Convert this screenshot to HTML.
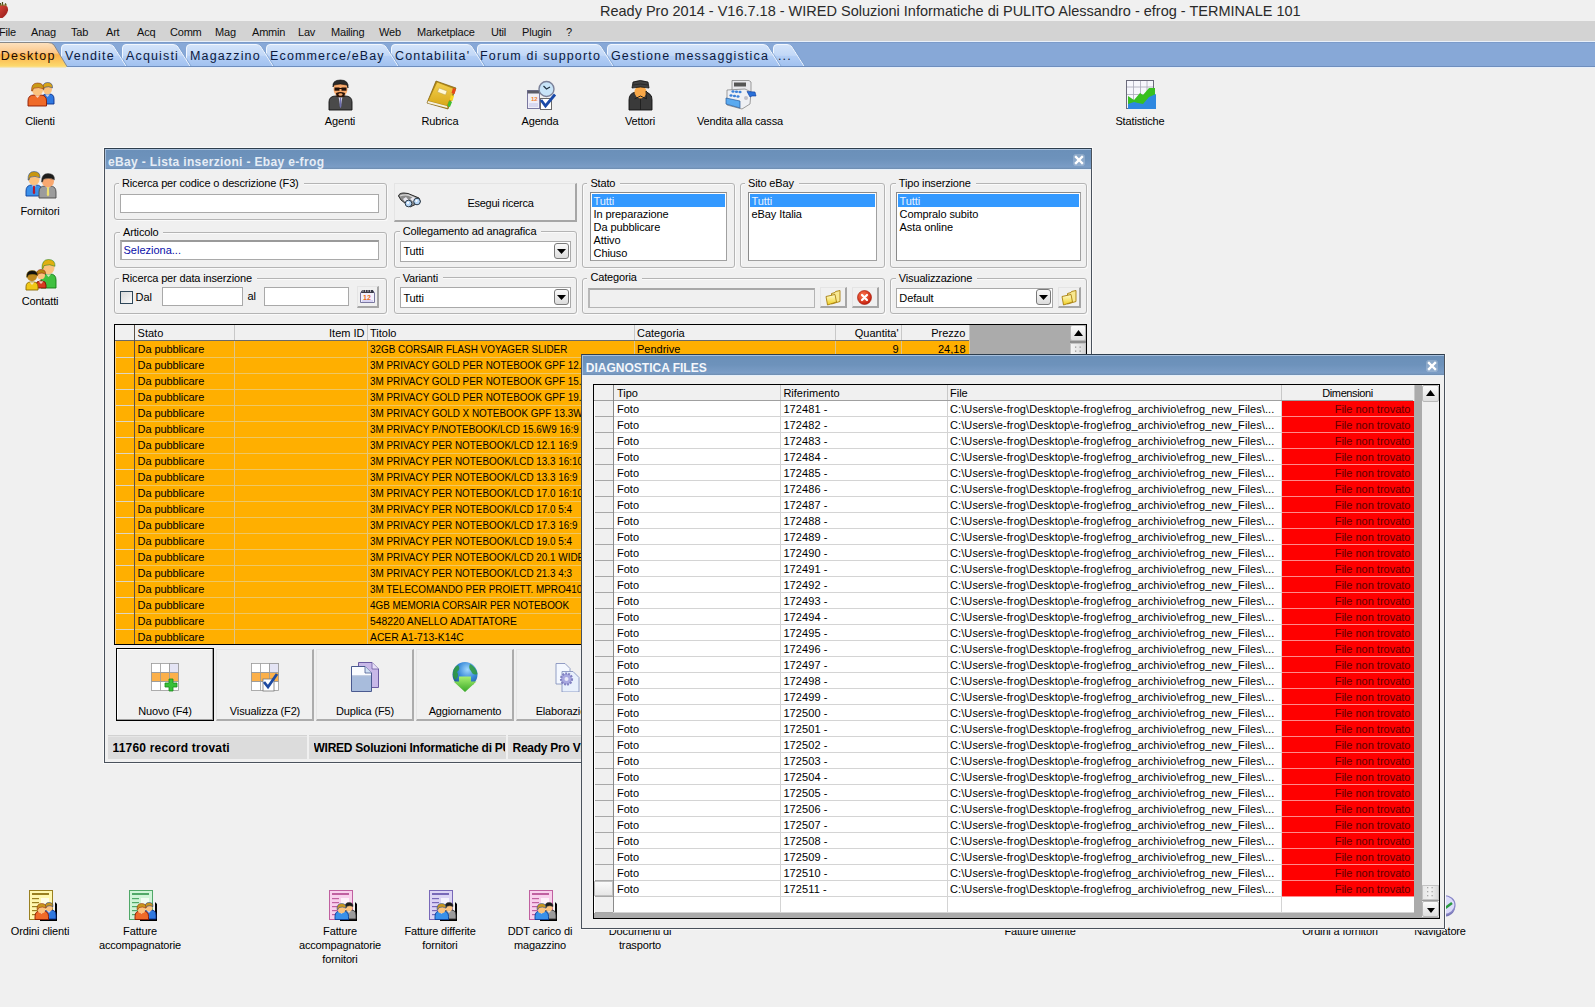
<!DOCTYPE html><html><head><meta charset="utf-8"><title>Ready Pro</title><style>
*{box-sizing:border-box;margin:0;padding:0}
html,body{width:1595px;height:1007px;overflow:hidden;background:#f0f0f0}
body{position:relative;font-family:"Liberation Sans",sans-serif;font-size:11px;color:#000}
.a{position:absolute}
.t{position:absolute;white-space:pre;line-height:1}
.lbl{position:absolute;white-space:pre;line-height:14px;text-align:center;font-size:11px;color:#000;letter-spacing:-0.15px}
</style></head><body><div class="a" style="left:0px;top:0px;width:1595px;height:21px;background:#f0f0f0"></div>
<div class="t" style="left:600px;top:4px;font-size:14.5px;color:#2a2a2a">Ready Pro 2014 - V16.7.18 - WIRED Soluzioni Informatiche di PULITO Alessandro - efrog - TERMINALE 101</div>
<svg class="a" style="left:0;top:0" width="12" height="20" viewBox="0 0 12 20"><defs><linearGradient id="sb" x1="0" y1="0" x2="1" y2="1"><stop offset="0" stop-color="#e04a3a"/><stop offset="1" stop-color="#901818"/></linearGradient></defs><path d="M-3,6 Q2,4.5 6,5.5 Q8.5,7 8,10.5 Q7,14.5 2.5,18 Q-1,18.5 -3,16Z" fill="url(#sb)"/><path d="M0.5,5.5 L0.5,3 M2.5,5.5 L2.5,2 M5.5,5.5 L5.5,3.2" stroke="#4a4a18" stroke-width="1.2"/><path d="M-1,5 L7,5" stroke="#8a7a30" stroke-width="1"/></svg>
<div class="a" style="left:0px;top:21px;width:1595px;height:20px;background:#d3d3d3"></div>
<div class="t" style="left:-1px;top:26.8px;font-size:11px;color:#101010;letter-spacing:-0.2px">File</div>
<div class="t" style="left:31px;top:26.8px;font-size:11px;color:#101010;letter-spacing:-0.2px">Anag</div>
<div class="t" style="left:71px;top:26.8px;font-size:11px;color:#101010;letter-spacing:-0.2px">Tab</div>
<div class="t" style="left:106px;top:26.8px;font-size:11px;color:#101010;letter-spacing:-0.2px">Art</div>
<div class="t" style="left:137px;top:26.8px;font-size:11px;color:#101010;letter-spacing:-0.2px">Acq</div>
<div class="t" style="left:170px;top:26.8px;font-size:11px;color:#101010;letter-spacing:-0.2px">Comm</div>
<div class="t" style="left:215px;top:26.8px;font-size:11px;color:#101010;letter-spacing:-0.2px">Mag</div>
<div class="t" style="left:252px;top:26.8px;font-size:11px;color:#101010;letter-spacing:-0.2px">Ammin</div>
<div class="t" style="left:298px;top:26.8px;font-size:11px;color:#101010;letter-spacing:-0.2px">Lav</div>
<div class="t" style="left:331px;top:26.8px;font-size:11px;color:#101010;letter-spacing:-0.2px">Mailing</div>
<div class="t" style="left:379px;top:26.8px;font-size:11px;color:#101010;letter-spacing:-0.2px">Web</div>
<div class="t" style="left:417px;top:26.8px;font-size:11px;color:#101010;letter-spacing:-0.2px">Marketplace</div>
<div class="t" style="left:491px;top:26.8px;font-size:11px;color:#101010;letter-spacing:-0.2px">Util</div>
<div class="t" style="left:522px;top:26.8px;font-size:11px;color:#101010;letter-spacing:-0.2px">Plugin</div>
<div class="t" style="left:566px;top:26.8px;font-size:11px;color:#101010;letter-spacing:-0.2px">?</div>

<svg class="a" style="left:26px;top:80px" width="32" height="28" viewBox="26 80 32 28"><path d="M42,104 L42,98.8 Q42,94 46.8,94 L49.2,94 Q54,94 54,98.8 L54,104 Z" fill="#2f78e0" stroke="#0b2f8a" stroke-width="0.9"/><path d="M45.0,94.3 L47.5,97 L50.0,94.3Z" fill="#f8e8e0" opacity=".8"/><ellipse cx="47.5" cy="89.05" rx="4.5" ry="5.17" fill="#fbc27e"/><path d="M42.5,89.82 Q42.2,82.5 47.5,82.5 Q52.8,82.5 52.5,87.95 Q48.5,85.75 44.5,87.4 L43.5,89.82Z" fill="#d8a418" stroke="#0b2f8a" stroke-width="0.5"/><path d="M28,106 L28,101 Q28,95 34,95 L40.5,95 Q46.5,95 46.5,101 L46.5,106 Z" fill="#ef6a28" stroke="#8a1800" stroke-width="0.9"/><path d="M35.0,95.3 L37.5,98 L40.0,95.3Z" fill="#f8e8e0" opacity=".8"/><ellipse cx="37.5" cy="90.1" rx="5.5" ry="5.64" fill="#fbc27e"/><path d="M31.5,90.94 Q31.2,83.0 37.5,83.0 Q43.8,83.0 43.5,88.9 Q38.5,86.5 33.5,88.3 L32.5,90.94Z" fill="#c99a16" stroke="#8a1800" stroke-width="0.5"/></svg>
<svg class="a" style="left:24px;top:170px" width="34" height="30" viewBox="24 170 34 30"><path d="M26,196 L26,191 Q26,185 32,185 L36,185 Q42,185 42,191 L42,196 Z" fill="#3a90ea" stroke="#0b3f9a" stroke-width="0.9"/><path d="M31.5,185.3 L34,188 L36.5,185.3Z" fill="#f8e8e0" opacity=".8"/><path d="M33.1,186 L34.9,186 L35.2,193 L34,194.5 L32.8,193Z" fill="#b01830"/><ellipse cx="34" cy="179.15" rx="5.5" ry="6.109999999999999" fill="#fbc27e"/><path d="M28.0,180.06 Q27.7,171.5 34,171.5 Q40.3,171.5 40.0,177.85 Q35,175.25 30.0,177.2 L29.0,180.06Z" fill="#c8960e" stroke="#0b3f9a" stroke-width="0.5"/><path d="M39,198 L39,192 Q39,186 45,186 L50,186 Q56,186 56,192 L56,198 Z" fill="#9c9c9c" stroke="#4a4a4a" stroke-width="0.9"/><path d="M45.5,186.3 L48,189 L50.5,186.3Z" fill="#f8e8e0" opacity=".8"/><path d="M47.1,187 L48.9,187 L49.2,195 L48,196.5 L46.8,195Z" fill="#f0e070"/><ellipse cx="48" cy="181.15" rx="6.0" ry="6.109999999999999" fill="#f9a870"/><path d="M41.5,182.06 Q41.2,173.5 48,173.5 Q54.8,173.5 54.5,179.85 Q49,177.25 43.5,179.2 L42.5,182.06Z" fill="#1c1c1c" stroke="#4a4a4a" stroke-width="0.5"/></svg>
<svg class="a" style="left:24px;top:258px" width="34" height="34" viewBox="24 258 34 34"><path d="M41,288 L41,280 Q41,274 47,274 L50,274 Q56,274 56,280 L56,288 Z" fill="#40c040" stroke="#107a10" stroke-width="0.9"/><path d="M46.0,274.3 L48.5,277 L51.0,274.3Z" fill="#f8e8e0" opacity=".8"/><ellipse cx="48.5" cy="267.7" rx="6.0" ry="6.58" fill="#fbc27e"/><path d="M42.0,268.68 Q41.7,259.5 48.5,259.5 Q55.3,259.5 55.0,266.3 Q49.5,263.5 44.0,265.6 L43.0,268.68Z" fill="#e0b010" stroke="#107a10" stroke-width="0.5"/><path d="M36,288 L36,285.0 Q36,281 40.0,281 L42.0,281 Q46,281 46,285.0 L46,288 Z" fill="#d83a20" stroke="#801000" stroke-width="0.9"/><path d="M38.5,281.3 L41,284 L43.5,281.3Z" fill="#f8e8e0" opacity=".8"/><ellipse cx="41" cy="274.95" rx="4.0" ry="4.2299999999999995" fill="#fbc27e"/><path d="M36.5,275.58 Q36.2,269.5 41,269.5 Q45.8,269.5 45.5,274.05 Q42,272.25 38.5,273.6 L37.5,275.58Z" fill="#b88410" stroke="#801000" stroke-width="0.5"/><path d="M26,290 L26,286.8 Q26,282 30.8,282 L33.2,282 Q38,282 38,286.8 L38,290 Z" fill="#f0c818" stroke="#8a6a00" stroke-width="0.9"/><path d="M29.5,282.3 L32,285 L34.5,282.3Z" fill="#f8e8e0" opacity=".8"/><ellipse cx="32" cy="276.5" rx="5.0" ry="4.699999999999999" fill="#c08a20"/><path d="M26.5,277.2 Q26.2,270.5 32,270.5 Q37.8,270.5 37.5,275.5 Q33,273.5 28.5,275.0 L27.5,277.2Z" fill="#111" stroke="#8a6a00" stroke-width="0.5"/></svg>
<svg class="a" style="left:326px;top:78px" width="30" height="34" viewBox="326 78 30 34"><path d="M329,110 L329,102 Q329,96 336,96 L345,96 Q352,96 352,102 L352,110Z" fill="#4a4a4a" stroke="#111" stroke-width="0.9"/><path d="M338.5,96.5 L340.5,108 L342.5,96.5Z" fill="#d8d8f0"/><path d="M340,98 L341,98 L341.5,106 L340.5,108 L339.5,106Z" fill="#7070b0"/><ellipse cx="340.5" cy="89" rx="7" ry="8" fill="#f7a86a"/><path d="M333,87 Q332,80 340.5,80 Q349,80 348,88 L347,85 Q340,83 334,85Z" fill="#2a2a2a" stroke="#000" stroke-width="0.6"/><rect x="334.5" y="87.5" width="5" height="3.2" fill="#221008"/><rect x="341.5" y="87.5" width="5" height="3.2" fill="#221008"/><rect x="339" y="88" width="3" height="1" fill="#221008"/><path d="M336,93 Q340.5,91 345,93 L344.5,96.5 Q340.5,98.5 336.5,96.5Z" fill="#2a1408"/><ellipse cx="340.5" cy="94.5" rx="2" ry="1.2" fill="#f7a86a"/></svg>
<svg class="a" style="left:626px;top:78px" width="30" height="34" viewBox="626 78 30 34"><path d="M629,110 L629,100 Q629,93 636,92 L645,92 Q652,93 652,100 L652,110Z" fill="#3a3a3a" stroke="#111" stroke-width="0.9"/><path d="M640.5,97 L640.5,110" stroke="#1a1a1a" stroke-width="0.8"/><ellipse cx="640.5" cy="92" rx="6" ry="6.5" fill="#f9a848"/><path d="M634.5,99 L640.5,96 L646.5,99 L646,91 L652,97" fill="none" stroke="#222" stroke-width="1"/><path d="M632,88 L633,82 Q640,79 648,82 L649,88 Q640.5,86 632,88Z" fill="#404040" stroke="#111" stroke-width="0.8"/><path d="M633,85 Q640.5,83 648,85" stroke="#222" stroke-width="0.8" fill="none"/></svg>
<svg class="a" style="left:424px;top:79px" width="34" height="33" viewBox="424 79 34 33"><defs><linearGradient id="rb" x1="0" y1="0" x2="0" y2="1"><stop offset="0" stop-color="#f4d050"/><stop offset="1" stop-color="#d8a818"/></linearGradient></defs><path d="M427,103 L436,81 L456,88 L448,109Z" fill="#b88a10" stroke="#7a5a08" stroke-width="0.7"/><path d="M428,101 L437,82 L455,89 L447,106Z" fill="url(#rb)" stroke="#a07a10" stroke-width="0.6"/><path d="M428,101 L447,106 L447.5,108 L427.5,103Z" fill="#f4f0e0"/><path d="M439,88 L447,91 L445.5,95 L437.5,92Z" fill="#fff8d8" stroke="#b8a050" stroke-width="0.5"/><path d="M453,88 L456,89 L454.5,94 L451.5,93Z" fill="#e84818"/><path d="M451,95 L454,96 L452.5,101 L449.5,100Z" fill="#f8d820"/><path d="M449,101 L452,102 L450,107 L447.5,106Z" fill="#40c030"/></svg>
<svg class="a" style="left:524px;top:79px" width="34" height="33" viewBox="524 79 34 33"><rect x="527.5" y="90.5" width="12" height="18" fill="#f0eef8" stroke="#7a78a0" stroke-width="1"/><rect x="527.5" y="90.5" width="12" height="3" fill="#5a5a6a"/><text x="531" y="101" font-size="6" font-weight="bold" font-family="Liberation Sans" fill="#f08030">12</text><rect x="529" y="103" width="9" height="4" fill="#d8d8f0"/><circle cx="546.5" cy="89" r="7.5" fill="#c8e4f8" stroke="#7a8098" stroke-width="1.4"/><path d="M543.5,86 L546.5,89 L550,87" stroke="#203040" stroke-width="1.2" fill="none"/><rect x="540.5" y="98.5" width="11" height="11" fill="#fff" stroke="#6a6a6a" stroke-width="1"/><path d="M541,100 L545.5,106 L555,94.5" stroke="#1a4aa8" stroke-width="2.8" fill="none"/></svg>
<svg class="a" style="left:724px;top:78px" width="34" height="33" viewBox="724 78 34 33"><path d="M732,80.5 L749,80.5 L751,82 L751,92 L732,92Z" fill="#e8e8ec" stroke="#777" stroke-width="0.7"/><rect x="734" y="82.5" width="12" height="4" fill="#555"/><path d="M727,90 L745,89 L751,92 L750,104 L742,109 L727,105Z" fill="#eef0f4" stroke="#777" stroke-width="0.7"/><ellipse cx="733" cy="91.5" rx="1.6" ry="1.2" fill="#3a80d8"/><ellipse cx="736.5" cy="91.8" rx="1.6" ry="1.2" fill="#3a80d8"/><ellipse cx="740" cy="92" rx="1.6" ry="1.2" fill="#3a80d8"/><ellipse cx="731" cy="95.5" rx="1.6" ry="1.3" fill="#3a80d8"/><ellipse cx="734.5" cy="96" rx="1.6" ry="1.3" fill="#3a80d8"/><ellipse cx="738" cy="96.5" rx="1.6" ry="1.3" fill="#3a80d8"/><path d="M726,98 L740,101 L740,108 L726,104Z" fill="#5aaaf0" stroke="#2a5a9a" stroke-width="0.7"/><path d="M747,91.5 L755,92 L756,96 L752,96 L750,97Z" fill="#2a70d8" stroke="#0a3a9a" stroke-width="0.6"/><circle cx="746" cy="98" r="2" fill="#c0c0c8"/></svg>
<svg class="a" style="left:1124px;top:78px" width="34" height="34" viewBox="1124 78 34 34"><rect x="1126.5" y="80.5" width="27" height="28" fill="#f6f6fc" stroke="#6a6a7a" stroke-width="1"/><path d="M1127,87 H1153 M1127,94.5 H1153 M1133.5,81 V109 M1140.5,81 V109 M1147,81 V109" stroke="#a8a8b8" stroke-width="0.8"/><path d="M1128,96 L1134,100 L1140,93 L1143,95 L1149,88 L1155,88 L1155,102 L1149,104 L1140,107 L1128,108Z" fill="#38c020"/><path d="M1128,104 L1134,102 L1138,103 L1143,104 L1149,97 L1156,94 L1156,109 L1128,109Z" fill="#2e88e0"/></svg>
<svg class="a" style="left:25px;top:886px" width="36" height="38" viewBox="25 886 36 38"><rect x="29.5" y="890.5" width="23" height="29" fill="#fff8b0" stroke="#9a8020" stroke-width="1"/><rect x="32" y="893" width="17" height="2" fill="#9a8020"/><rect x="32" y="898" width="7" height="1.2" fill="#9a8020"/><rect x="32" y="902" width="7" height="1.2" fill="#9a8020"/><rect x="32" y="906" width="7" height="1.2" fill="#9a8020"/><rect x="32" y="910" width="7" height="1.2" fill="#9a8020"/><rect x="32" y="914" width="7" height="1.2" fill="#9a8020"/><rect x="41" y="898" width="8" height="6" fill="#fff" opacity=".7"/><path d="M40,921 L57,921 L57,904 L55,902 L55,919 L40,919Z" fill="#000"/><path d="M43,919 L43,915.2 Q43,910 48.2,910 L50.8,910 Q56,910 56,915.2 L56,919 Z" fill="#2f78e0" stroke="#0b2f8a" stroke-width="0.9"/><path d="M46.5,910.3 L49,913 L51.5,910.3Z" fill="#f8e8e0" opacity=".8"/><ellipse cx="49" cy="907.4" rx="3.5" ry="3.76" fill="#fbc27e"/><path d="M45.0,907.96 Q44.7,902.5 49,902.5 Q53.3,902.5 53.0,906.6 Q50,905.0 47.0,906.2 L46.0,907.96Z" fill="#c8961e" stroke="#0b2f8a" stroke-width="0.5"/><path d="M35,919.5 L35,916.4 Q35,911 40.4,911 L43.1,911 Q48.5,911 48.5,916.4 L48.5,919.5 Z" fill="#ef6a28" stroke="#8a1800" stroke-width="0.9"/><path d="M39.0,911.3 L41.5,914 L44.0,911.3Z" fill="#f8e8e0" opacity=".8"/><ellipse cx="41.5" cy="908.95" rx="4.0" ry="4.2299999999999995" fill="#fbc27e"/><path d="M37.0,909.58 Q36.7,903.5 41.5,903.5 Q46.3,903.5 46.0,908.05 Q42.5,906.25 39.0,907.6 L38.0,909.58Z" fill="#c8961e" stroke="#8a1800" stroke-width="0.5"/></svg>
<svg class="a" style="left:125px;top:886px" width="36" height="38" viewBox="125 886 36 38"><rect x="129.5" y="890.5" width="23" height="29" fill="#d0f4d8" stroke="#50a868" stroke-width="1"/><rect x="132" y="893" width="17" height="2" fill="#50a868"/><rect x="132" y="898" width="7" height="1.2" fill="#50a868"/><rect x="132" y="902" width="7" height="1.2" fill="#50a868"/><rect x="132" y="906" width="7" height="1.2" fill="#50a868"/><rect x="132" y="910" width="7" height="1.2" fill="#50a868"/><rect x="132" y="914" width="7" height="1.2" fill="#50a868"/><rect x="141" y="898" width="8" height="6" fill="#fff" opacity=".7"/><path d="M140,921 L157,921 L157,904 L155,902 L155,919 L140,919Z" fill="#000"/><path d="M143,919 L143,915.2 Q143,910 148.2,910 L150.8,910 Q156,910 156,915.2 L156,919 Z" fill="#2f78e0" stroke="#0b2f8a" stroke-width="0.9"/><path d="M146.5,910.3 L149,913 L151.5,910.3Z" fill="#f8e8e0" opacity=".8"/><ellipse cx="149" cy="907.4" rx="3.5" ry="3.76" fill="#fbc27e"/><path d="M145.0,907.96 Q144.7,902.5 149,902.5 Q153.3,902.5 153.0,906.6 Q150,905.0 147.0,906.2 L146.0,907.96Z" fill="#c8961e" stroke="#0b2f8a" stroke-width="0.5"/><path d="M135,919.5 L135,916.4 Q135,911 140.4,911 L143.1,911 Q148.5,911 148.5,916.4 L148.5,919.5 Z" fill="#ef6a28" stroke="#8a1800" stroke-width="0.9"/><path d="M139.0,911.3 L141.5,914 L144.0,911.3Z" fill="#f8e8e0" opacity=".8"/><ellipse cx="141.5" cy="908.95" rx="4.0" ry="4.2299999999999995" fill="#fbc27e"/><path d="M137.0,909.58 Q136.7,903.5 141.5,903.5 Q146.3,903.5 146.0,908.05 Q142.5,906.25 139.0,907.6 L138.0,909.58Z" fill="#c8961e" stroke="#8a1800" stroke-width="0.5"/></svg>
<svg class="a" style="left:325px;top:886px" width="36" height="38" viewBox="325 886 36 38"><rect x="329.5" y="890.5" width="23" height="29" fill="#f8d0ec" stroke="#c060a0" stroke-width="1"/><rect x="332" y="893" width="17" height="2" fill="#c060a0"/><rect x="332" y="898" width="7" height="1.2" fill="#c060a0"/><rect x="332" y="902" width="7" height="1.2" fill="#c060a0"/><rect x="332" y="906" width="7" height="1.2" fill="#c060a0"/><rect x="332" y="910" width="7" height="1.2" fill="#c060a0"/><rect x="332" y="914" width="7" height="1.2" fill="#c060a0"/><rect x="341" y="898" width="8" height="6" fill="#fff" opacity=".7"/><path d="M340,921 L357,921 L357,904 L355,902 L355,919 L340,919Z" fill="#000"/><path d="M343,919 L343,915.2 Q343,910 348.2,910 L350.8,910 Q356,910 356,915.2 L356,919 Z" fill="#9c9c9c" stroke="#333" stroke-width="0.9"/><path d="M346.5,910.3 L349,913 L351.5,910.3Z" fill="#f8e8e0" opacity=".8"/><ellipse cx="349" cy="907.4" rx="3.5" ry="3.76" fill="#fbc27e"/><path d="M345.0,907.96 Q344.7,902.5 349,902.5 Q353.3,902.5 353.0,906.6 Q350,905.0 347.0,906.2 L346.0,907.96Z" fill="#1c1c1c" stroke="#333" stroke-width="0.5"/><path d="M335,919.5 L335,916.4 Q335,911 340.4,911 L343.1,911 Q348.5,911 348.5,916.4 L348.5,919.5 Z" fill="#3a90ea" stroke="#0b3f9a" stroke-width="0.9"/><path d="M339.0,911.3 L341.5,914 L344.0,911.3Z" fill="#f8e8e0" opacity=".8"/><ellipse cx="341.5" cy="908.95" rx="4.0" ry="4.2299999999999995" fill="#fbc27e"/><path d="M337.0,909.58 Q336.7,903.5 341.5,903.5 Q346.3,903.5 346.0,908.05 Q342.5,906.25 339.0,907.6 L338.0,909.58Z" fill="#c8961e" stroke="#0b3f9a" stroke-width="0.5"/></svg>
<svg class="a" style="left:425px;top:886px" width="36" height="38" viewBox="425 886 36 38"><rect x="429.5" y="890.5" width="23" height="29" fill="#dcd4f4" stroke="#7868b8" stroke-width="1"/><rect x="432" y="893" width="17" height="2" fill="#7868b8"/><rect x="432" y="898" width="7" height="1.2" fill="#7868b8"/><rect x="432" y="902" width="7" height="1.2" fill="#7868b8"/><rect x="432" y="906" width="7" height="1.2" fill="#7868b8"/><rect x="432" y="910" width="7" height="1.2" fill="#7868b8"/><rect x="432" y="914" width="7" height="1.2" fill="#7868b8"/><rect x="441" y="898" width="8" height="6" fill="#fff" opacity=".7"/><path d="M440,921 L457,921 L457,904 L455,902 L455,919 L440,919Z" fill="#000"/><path d="M443,919 L443,915.2 Q443,910 448.2,910 L450.8,910 Q456,910 456,915.2 L456,919 Z" fill="#9c9c9c" stroke="#333" stroke-width="0.9"/><path d="M446.5,910.3 L449,913 L451.5,910.3Z" fill="#f8e8e0" opacity=".8"/><ellipse cx="449" cy="907.4" rx="3.5" ry="3.76" fill="#fbc27e"/><path d="M445.0,907.96 Q444.7,902.5 449,902.5 Q453.3,902.5 453.0,906.6 Q450,905.0 447.0,906.2 L446.0,907.96Z" fill="#1c1c1c" stroke="#333" stroke-width="0.5"/><path d="M435,919.5 L435,916.4 Q435,911 440.4,911 L443.1,911 Q448.5,911 448.5,916.4 L448.5,919.5 Z" fill="#3a90ea" stroke="#0b3f9a" stroke-width="0.9"/><path d="M439.0,911.3 L441.5,914 L444.0,911.3Z" fill="#f8e8e0" opacity=".8"/><ellipse cx="441.5" cy="908.95" rx="4.0" ry="4.2299999999999995" fill="#fbc27e"/><path d="M437.0,909.58 Q436.7,903.5 441.5,903.5 Q446.3,903.5 446.0,908.05 Q442.5,906.25 439.0,907.6 L438.0,909.58Z" fill="#c8961e" stroke="#0b3f9a" stroke-width="0.5"/></svg>
<svg class="a" style="left:525px;top:886px" width="36" height="38" viewBox="525 886 36 38"><rect x="529.5" y="890.5" width="23" height="29" fill="#f8d0ec" stroke="#c060a0" stroke-width="1"/><rect x="532" y="893" width="17" height="2" fill="#c060a0"/><rect x="532" y="898" width="7" height="1.2" fill="#c060a0"/><rect x="532" y="902" width="7" height="1.2" fill="#c060a0"/><rect x="532" y="906" width="7" height="1.2" fill="#c060a0"/><rect x="532" y="910" width="7" height="1.2" fill="#c060a0"/><rect x="532" y="914" width="7" height="1.2" fill="#c060a0"/><rect x="541" y="898" width="8" height="6" fill="#fff" opacity=".7"/><path d="M540,921 L557,921 L557,904 L555,902 L555,919 L540,919Z" fill="#000"/><path d="M543,919 L543,915.2 Q543,910 548.2,910 L550.8,910 Q556,910 556,915.2 L556,919 Z" fill="#9c9c9c" stroke="#333" stroke-width="0.9"/><path d="M546.5,910.3 L549,913 L551.5,910.3Z" fill="#f8e8e0" opacity=".8"/><ellipse cx="549" cy="907.4" rx="3.5" ry="3.76" fill="#fbc27e"/><path d="M545.0,907.96 Q544.7,902.5 549,902.5 Q553.3,902.5 553.0,906.6 Q550,905.0 547.0,906.2 L546.0,907.96Z" fill="#1c1c1c" stroke="#333" stroke-width="0.5"/><path d="M535,919.5 L535,916.4 Q535,911 540.4,911 L543.1,911 Q548.5,911 548.5,916.4 L548.5,919.5 Z" fill="#3a90ea" stroke="#0b3f9a" stroke-width="0.9"/><path d="M539.0,911.3 L541.5,914 L544.0,911.3Z" fill="#f8e8e0" opacity=".8"/><ellipse cx="541.5" cy="908.95" rx="4.0" ry="4.2299999999999995" fill="#fbc27e"/><path d="M537.0,909.58 Q536.7,903.5 541.5,903.5 Q546.3,903.5 546.0,908.05 Q542.5,906.25 539.0,907.6 L538.0,909.58Z" fill="#c8961e" stroke="#0b3f9a" stroke-width="0.5"/></svg>
<svg class="a" style="left:1420px;top:886px" width="40" height="34" viewBox="1420 886 40 34"><ellipse cx="1444" cy="907" rx="11" ry="10" fill="#7a78b8"/><ellipse cx="1444" cy="905" rx="11" ry="9.5" fill="#dcdcfa" stroke="#8a88c8" stroke-width="1.2"/><path d="M1444,909 L1452,903" stroke="#2a9a40" stroke-width="2.5"/></svg>
<div class="lbl" style="left:-30px;top:114px;width:140px">Clienti</div>
<div class="lbl" style="left:270px;top:114px;width:140px">Agenti</div>
<div class="lbl" style="left:370px;top:114px;width:140px">Rubrica</div>
<div class="lbl" style="left:470px;top:114px;width:140px">Agenda</div>
<div class="lbl" style="left:570px;top:114px;width:140px">Vettori</div>
<div class="lbl" style="left:670px;top:114px;width:140px">Vendita alla cassa</div>
<div class="lbl" style="left:1070px;top:114px;width:140px">Statistiche</div>
<div class="lbl" style="left:-30px;top:204px;width:140px">Fornitori</div>
<div class="lbl" style="left:-30px;top:294px;width:140px">Contatti</div>
<div class="lbl" style="left:-30px;top:924px;width:140px">Ordini clienti</div>
<div class="lbl" style="left:70px;top:924px;width:140px">Fatture<br>accompagnatorie</div>
<div class="lbl" style="left:270px;top:924px;width:140px">Fatture<br>accompagnatorie<br>fornitori</div>
<div class="lbl" style="left:370px;top:924px;width:140px">Fatture differite<br>fornitori</div>
<div class="lbl" style="left:470px;top:924px;width:140px">DDT carico di<br>magazzino</div>
<div class="lbl" style="left:570px;top:924px;width:140px">Documenti di<br>trasporto</div>
<div class="lbl" style="left:970px;top:924px;width:140px">Fatture differite</div>
<div class="lbl" style="left:1270px;top:924px;width:140px">Ordini a fornitori</div>
<div class="lbl" style="left:1370px;top:924px;width:140px">Navigatore</div>
<svg class="a" style="left:0;top:41px" width="1595" height="27" viewBox="0 41 1595 27"><defs><linearGradient id="tg" x1="0" y1="0" x2="0" y2="1"><stop offset="0" stop-color="#d4e4fa"/><stop offset="0.5" stop-color="#c2d8f7"/><stop offset="0.56" stop-color="#b2cdf4"/><stop offset="1" stop-color="#a2c2f0"/></linearGradient><linearGradient id="ag" x1="0" y1="0" x2="0" y2="1"><stop offset="0" stop-color="#fde2c0"/><stop offset="0.42" stop-color="#fcc88a"/><stop offset="0.5" stop-color="#fbb04a"/><stop offset="1" stop-color="#fcdc70"/></linearGradient></defs><rect x="0" y="41" width="1595" height="26" fill="#87a8d7"/><rect x="0" y="42" width="1595" height="1" fill="#7b9bca"/><rect x="0" y="41" width="1595" height="1" fill="#e8f0fa"/><rect x="0" y="66" width="1595" height="1" fill="#6e8ebe"/><rect x="0" y="67" width="1595" height="1" fill="#e9f0f9"/><path d="M773.5,66 L773.5,48 Q773.5,44.5 777,44.5 L787,44.5 Q790,44.5 792,47 L804,66 Z" fill="url(#tg)"/><path d="M773.5,66 L773.5,48 Q773.5,44.5 777,44.5 L787,44.5 Q790,44.5 792,47 L804,66" fill="none" stroke="#f2f7fe" stroke-width="1"/><path d="M792,47 L804,66" stroke="#7fa2d2" stroke-width="0.8" fill="none" transform="translate(1,0)"/><path d="M607.5,66 L607.5,48 Q607.5,44.5 611,44.5 L763,44.5 Q766,44.5 768,47 L780,66 Z" fill="url(#tg)"/><path d="M607.5,66 L607.5,48 Q607.5,44.5 611,44.5 L763,44.5 Q766,44.5 768,47 L780,66" fill="none" stroke="#f2f7fe" stroke-width="1"/><path d="M768,47 L780,66" stroke="#7fa2d2" stroke-width="0.8" fill="none" transform="translate(1,0)"/><path d="M477.5,66 L477.5,48 Q477.5,44.5 481,44.5 L596,44.5 Q599,44.5 601,47 L613,66 Z" fill="url(#tg)"/><path d="M477.5,66 L477.5,48 Q477.5,44.5 481,44.5 L596,44.5 Q599,44.5 601,47 L613,66" fill="none" stroke="#f2f7fe" stroke-width="1"/><path d="M601,47 L613,66" stroke="#7fa2d2" stroke-width="0.8" fill="none" transform="translate(1,0)"/><path d="M391.5,66 L391.5,48 Q391.5,44.5 395,44.5 L467,44.5 Q470,44.5 472,47 L484,66 Z" fill="url(#tg)"/><path d="M391.5,66 L391.5,48 Q391.5,44.5 395,44.5 L467,44.5 Q470,44.5 472,47 L484,66" fill="none" stroke="#f2f7fe" stroke-width="1"/><path d="M472,47 L484,66" stroke="#7fa2d2" stroke-width="0.8" fill="none" transform="translate(1,0)"/><path d="M266.5,66 L266.5,48 Q266.5,44.5 270,44.5 L381,44.5 Q384,44.5 386,47 L398,66 Z" fill="url(#tg)"/><path d="M266.5,66 L266.5,48 Q266.5,44.5 270,44.5 L381,44.5 Q384,44.5 386,47 L398,66" fill="none" stroke="#f2f7fe" stroke-width="1"/><path d="M386,47 L398,66" stroke="#7fa2d2" stroke-width="0.8" fill="none" transform="translate(1,0)"/><path d="M186.5,66 L186.5,48 Q186.5,44.5 190,44.5 L256,44.5 Q259,44.5 261,47 L273,66 Z" fill="url(#tg)"/><path d="M186.5,66 L186.5,48 Q186.5,44.5 190,44.5 L256,44.5 Q259,44.5 261,47 L273,66" fill="none" stroke="#f2f7fe" stroke-width="1"/><path d="M261,47 L273,66" stroke="#7fa2d2" stroke-width="0.8" fill="none" transform="translate(1,0)"/><path d="M122.5,66 L122.5,48 Q122.5,44.5 126,44.5 L173,44.5 Q176,44.5 178,47 L190,66 Z" fill="url(#tg)"/><path d="M122.5,66 L122.5,48 Q122.5,44.5 126,44.5 L173,44.5 Q176,44.5 178,47 L190,66" fill="none" stroke="#f2f7fe" stroke-width="1"/><path d="M178,47 L190,66" stroke="#7fa2d2" stroke-width="0.8" fill="none" transform="translate(1,0)"/><path d="M61.5,66 L61.5,48 Q61.5,44.5 65,44.5 L109,44.5 Q112,44.5 114,47 L126,66 Z" fill="url(#tg)"/><path d="M61.5,66 L61.5,48 Q61.5,44.5 65,44.5 L109,44.5 Q112,44.5 114,47 L126,66" fill="none" stroke="#f2f7fe" stroke-width="1"/><path d="M114,47 L126,66" stroke="#7fa2d2" stroke-width="0.8" fill="none" transform="translate(1,0)"/><path d="M-3,67 L-3,42.5 L48,42.5 Q52,42.5 54,45 L67,67 Z" fill="url(#ag)"/><path d="M-3,42.5 L48,42.5 Q52,42.5 54,45 L67,66.5" fill="none" stroke="#888" stroke-width="1"/><rect x="0" y="66" width="66" height="1.5" fill="#fcdc80"/></svg>
<div class="t" style="left:65px;top:50.22px;font-size:12.5px;letter-spacing:1.15px;color:#0c1a3e">Vendite</div>
<div class="t" style="left:126px;top:50.22px;font-size:12.5px;letter-spacing:1.15px;color:#0c1a3e">Acquisti</div>
<div class="t" style="left:190px;top:50.22px;font-size:12.5px;letter-spacing:1.15px;color:#0c1a3e">Magazzino</div>
<div class="t" style="left:270px;top:50.22px;font-size:12.5px;letter-spacing:1.15px;color:#0c1a3e">Ecommerce/eBay</div>
<div class="t" style="left:395px;top:50.22px;font-size:12.5px;letter-spacing:1.15px;color:#0c1a3e">Contabilita'</div>
<div class="t" style="left:480px;top:50.22px;font-size:12.5px;letter-spacing:1.15px;color:#0c1a3e">Forum di supporto</div>
<div class="t" style="left:611px;top:50.22px;font-size:12.5px;letter-spacing:1.15px;color:#0c1a3e">Gestione messaggistica</div>
<div class="t" style="left:778px;top:50.22px;font-size:12.5px;letter-spacing:1.15px;color:#0c1a3e">...</div>
<div class="t" style="left:0.8px;top:50.22px;font-size:12.5px;letter-spacing:1.3px;color:#200800">Desktop</div>
<div class="a" style="left:104px;top:148px;width:988px;height:615px;background:#f0f0f0;border:1px solid #4a525c;border-top-color:#2e3e4e;outline:1px solid #fafafa"></div>
<div class="a" style="left:105px;top:149px;width:986px;height:21px;background:linear-gradient(#6b90b9,#6d92bb 45%,#7b9dc6 90%,#6e8cae);border-top:1px solid #a6bfdc;border-bottom:1px solid #e6f0fa;box-shadow:inset 1px 0 0 #a8c0dc"></div>
<div class="t" style="left:108px;top:155.63px;font-size:12px;font-weight:bold;color:#e6edf5;letter-spacing:0.35px">eBay - Lista inserzioni - Ebay e-frog</div>
<svg class="a" style="left:1073px;top:154px" width="12" height="12" viewBox="0 0 12 12"><rect x="0.5" y="0.5" width="11" height="11" rx="1.5" fill="rgba(255,255,255,.2)" stroke="rgba(255,255,255,.12)" stroke-width="1"/><path d="M3,3 L9,9 M9,3 L3,9" stroke="#fff" stroke-width="2.4" stroke-linecap="square"/></svg>
<div class="a" style="left:114px;top:183px;width:273px;height:37px;border:1px solid #b4b4b4;border-radius:3px;box-shadow:inset 1px 1px 0 #fafafa, 1px 1px 0 #fafafa"></div>
<div class="t" style="left:119px;top:177.86px;font-size:11px;color:#000;letter-spacing:-0.15px;background:#f0f0f0;padding:0 5px 0 3px">Ricerca per codice o descrizione (F3)</div>
<div class="a" style="left:120px;top:194px;width:259px;height:19px;background:#fff;border:1px solid #a9a9a9;"></div>
<div class="a" style="left:114px;top:232px;width:273px;height:36px;border:1px solid #b4b4b4;border-radius:3px;box-shadow:inset 1px 1px 0 #fafafa, 1px 1px 0 #fafafa"></div>
<div class="t" style="left:120px;top:226.86px;font-size:11px;color:#000;letter-spacing:-0.15px;background:#f0f0f0;padding:0 5px 0 3px">Articolo</div>
<div class="a" style="left:120px;top:240px;width:259px;height:20px;background:#fff;border:1px solid #a9a9a9;border-top:2px solid #9a9a9a;border-left:2px solid #b0b0b0"></div>
<div class="t" style="left:123.5px;top:244.56px;font-size:11px;color:#0a10a8">Seleziona...</div>
<div class="a" style="left:114px;top:278px;width:273px;height:36px;border:1px solid #b4b4b4;border-radius:3px;box-shadow:inset 1px 1px 0 #fafafa, 1px 1px 0 #fafafa"></div>
<div class="t" style="left:119px;top:273.36px;font-size:11px;color:#000;letter-spacing:-0.15px;background:#f0f0f0;padding:0 5px 0 3px">Ricerca per data inserzione</div>
<div class="a" style="left:120px;top:291px;width:13px;height:13px;border:1.5px solid #2e4658;background:linear-gradient(135deg,#dadada,#fafafa)"></div>
<div class="t" style="left:135.5px;top:292.46px;font-size:11px;">Dal</div>
<div class="a" style="left:162px;top:287px;width:81px;height:19px;background:#fff;border:1px solid #a9a9a9;"></div>
<div class="t" style="left:247.5px;top:290.86px;font-size:11px;">al</div>
<div class="a" style="left:264px;top:287px;width:85px;height:19px;background:#fff;border:1px solid #a9a9a9;"></div>
<div class="a" style="left:357px;top:286px;width:22px;height:22px;background:#f0f0f0;border-top:1px solid #e4e4e4;border-left:1px solid #e4e4e4;border-right:2px solid #a6a6a6;border-bottom:2px solid #a6a6a6;"></div>
<svg class="a" style="left:359px;top:288px" width="17" height="17" viewBox="0 0 17 17"><path d="M1.5,5 L3,3 H14 L15.5,5 V14.5 H1.5Z" fill="#f4f2fc" stroke="#7a78a0" stroke-width="1"/><path d="M3,2 H14 L15,5 H2Z" fill="#3a3a48"/><path d="M4,1.5 V4 M6.5,1.5 V4 M9,1.5 V4 M11.5,1.5 V4" stroke="#fff" stroke-width="0.6"/><text x="4" y="11.5" font-size="7" font-weight="bold" font-family="Liberation Sans" fill="#e86a20">12</text><rect x="3" y="12" width="11" height="2" fill="#d8d4f4"/></svg>
<div class="a" style="left:394px;top:183px;width:183px;height:39px;background:#f0f0f0;border-top:1px solid #e4e4e4;border-left:1px solid #e4e4e4;border-right:2px solid #a6a6a6;border-bottom:2px solid #a6a6a6;"></div>
<svg class="a" style="left:396px;top:190px" width="26" height="20" viewBox="396 190 26 20"><path d="M398.5,196 Q399,193 404,193 L408,193.5 L419,198 L420.5,202 L410,207 L401,200Z" fill="#8a8a8a" stroke="#2a2a2a" stroke-width="1"/><path d="M400,196 Q403,194.5 408,195 L416,198.5" stroke="#d8d8d8" stroke-width="1.3" fill="none"/><path d="M403,199 L408,206 L411,203 L406,197Z M410,199 L416,204 L419,200 L413,197Z" fill="#e8e8f0"/><circle cx="408.5" cy="203.5" r="3.3" fill="#b8d8f8" stroke="#2a3a4a" stroke-width="1"/><circle cx="417" cy="201.5" r="3.3" fill="#b8d8f8" stroke="#2a3a4a" stroke-width="1"/><circle cx="408" cy="202.8" r="1.1" fill="#fff"/><circle cx="416.5" cy="200.8" r="1.1" fill="#fff"/></svg>
<div class="t" style="left:467.4px;top:198.06px;font-size:11px;letter-spacing:-0.25px">Esegui ricerca</div>
<div class="a" style="left:394px;top:231px;width:183px;height:37px;border:1px solid #b4b4b4;border-radius:3px;box-shadow:inset 1px 1px 0 #fafafa, 1px 1px 0 #fafafa"></div>
<div class="t" style="left:399.7px;top:226.36px;font-size:11px;color:#000;letter-spacing:-0.15px;background:#f0f0f0;padding:0 5px 0 3px">Collegamento ad anagrafica</div>
<div class="a" style="left:400px;top:241px;width:171px;height:21px;background:#fff;border:1px solid #a9a9a9;"></div>
<div class="t" style="left:403.4px;top:246.46px;font-size:11px;letter-spacing:-0.1px">Tutti</div>
<div class="a" style="left:554px;top:243px;width:15px;height:16px;border:1px solid #7a7a7a;border-radius:3px;background:linear-gradient(#fafafa,#dcdcdc)"></div>
<svg class="a" style="left:557px;top:249px" width="9" height="5" viewBox="0 0 9 5"><path d="M0,0 H9 L4.5,5Z" fill="#000"/></svg>
<div class="a" style="left:394px;top:277px;width:183px;height:37px;border:1px solid #b4b4b4;border-radius:3px;box-shadow:inset 1px 1px 0 #fafafa, 1px 1px 0 #fafafa"></div>
<div class="t" style="left:399.7px;top:272.56px;font-size:11px;color:#000;letter-spacing:-0.15px;background:#f0f0f0;padding:0 5px 0 3px">Varianti</div>
<div class="a" style="left:400px;top:287px;width:171px;height:21px;background:#fff;border:1px solid #a9a9a9;"></div>
<div class="t" style="left:403.4px;top:292.66px;font-size:11px;letter-spacing:-0.1px">Tutti</div>
<div class="a" style="left:554px;top:289px;width:15px;height:16px;border:1px solid #7a7a7a;border-radius:3px;background:linear-gradient(#fafafa,#dcdcdc)"></div>
<svg class="a" style="left:557px;top:295px" width="9" height="5" viewBox="0 0 9 5"><path d="M0,0 H9 L4.5,5Z" fill="#000"/></svg>
<div class="a" style="left:582px;top:183px;width:153px;height:85px;border:1px solid #b4b4b4;border-radius:3px;box-shadow:inset 1px 1px 0 #fafafa, 1px 1px 0 #fafafa"></div>
<div class="t" style="left:587.4px;top:177.86px;font-size:11px;color:#000;letter-spacing:-0.15px;background:#f0f0f0;padding:0 5px 0 3px">Stato</div>
<div class="a" style="left:590px;top:192px;width:137px;height:69px;background:#fff;border:1px solid #a0a0a0;border-top-color:#8a8a8a;border-left-color:#8a8a8a"></div>
<div class="a" style="left:592px;top:194px;width:133px;height:13px;background:#3399ff"></div>
<div class="t" style="left:593.6px;top:195.96px;font-size:11px;color:#e8f2ff;letter-spacing:-0.1px">Tutti</div>
<div class="t" style="left:593.6px;top:208.96px;font-size:11px;color:#000;letter-spacing:-0.1px">In preparazione</div>
<div class="t" style="left:593.6px;top:221.96px;font-size:11px;color:#000;letter-spacing:-0.1px">Da pubblicare</div>
<div class="t" style="left:593.6px;top:234.96px;font-size:11px;color:#000;letter-spacing:-0.1px">Attivo</div>
<div class="t" style="left:593.6px;top:247.96px;font-size:11px;color:#000;letter-spacing:-0.1px">Chiuso</div>
<div class="a" style="left:740px;top:183px;width:145px;height:85px;border:1px solid #b4b4b4;border-radius:3px;box-shadow:inset 1px 1px 0 #fafafa, 1px 1px 0 #fafafa"></div>
<div class="t" style="left:745px;top:177.86px;font-size:11px;color:#000;letter-spacing:-0.15px;background:#f0f0f0;padding:0 5px 0 3px">Sito eBay</div>
<div class="a" style="left:748px;top:192px;width:129px;height:69px;background:#fff;border:1px solid #a0a0a0;border-top-color:#8a8a8a;border-left-color:#8a8a8a"></div>
<div class="a" style="left:750px;top:194px;width:125px;height:13px;background:#3399ff"></div>
<div class="t" style="left:751.6px;top:195.96px;font-size:11px;color:#e8f2ff;letter-spacing:-0.1px">Tutti</div>
<div class="t" style="left:751.6px;top:208.96px;font-size:11px;color:#000;letter-spacing:-0.1px">eBay Italia</div>
<div class="a" style="left:890px;top:183px;width:197px;height:85px;border:1px solid #b4b4b4;border-radius:3px;box-shadow:inset 1px 1px 0 #fafafa, 1px 1px 0 #fafafa"></div>
<div class="t" style="left:895.8px;top:177.86px;font-size:11px;color:#000;letter-spacing:-0.15px;background:#f0f0f0;padding:0 5px 0 3px">Tipo inserzione</div>
<div class="a" style="left:896px;top:192px;width:185px;height:69px;background:#fff;border:1px solid #a0a0a0;border-top-color:#8a8a8a;border-left-color:#8a8a8a"></div>
<div class="a" style="left:898px;top:194px;width:181px;height:13px;background:#3399ff"></div>
<div class="t" style="left:899.6px;top:195.96px;font-size:11px;color:#e8f2ff;letter-spacing:-0.1px">Tutti</div>
<div class="t" style="left:899.6px;top:208.96px;font-size:11px;color:#000;letter-spacing:-0.1px">Compralo subito</div>
<div class="t" style="left:899.6px;top:221.96px;font-size:11px;color:#000;letter-spacing:-0.1px">Asta online</div>
<div class="a" style="left:582px;top:278px;width:303px;height:36px;border:1px solid #b4b4b4;border-radius:3px;box-shadow:inset 1px 1px 0 #fafafa, 1px 1px 0 #fafafa"></div>
<div class="t" style="left:587.4px;top:272.26px;font-size:11px;color:#000;letter-spacing:-0.15px;background:#f0f0f0;padding:0 5px 0 3px">Categoria</div>
<div class="a" style="left:588px;top:288px;width:227px;height:20px;background:#f0f0f0;border:1px solid #b4b4b4;border-top:2px solid #a8a8a8;border-left:2px solid #b8b8b8"></div>
<div class="a" style="left:820px;top:287px;width:27px;height:21px;background:#f0f0f0;border-top:1px solid #e4e4e4;border-left:1px solid #e4e4e4;border-right:2px solid #a6a6a6;border-bottom:2px solid #a6a6a6;"></div>
<svg class="a" style="left:823px;top:288px" width="20" height="20" viewBox="0 0 20 20"><defs><linearGradient id="fg" x1="0" y1="0" x2="0" y2="1"><stop offset="0" stop-color="#fffbd0"/><stop offset="1" stop-color="#f0d020"/></linearGradient></defs><path d="M8.5,5.5 L12,4.5 L12.5,3.5 L17,2.5 L17,13.5 L8.5,16Z" fill="#f8e890" stroke="#a88010" stroke-width="0.9"/><path d="M3,8.5 L12,6.5 L13.5,14 L4.5,17 Z" fill="url(#fg)" stroke="#a88010" stroke-width="0.9"/></svg>
<div class="a" style="left:852px;top:287px;width:27px;height:21px;background:#f0f0f0;border-top:1px solid #e4e4e4;border-left:1px solid #e4e4e4;border-right:2px solid #a6a6a6;border-bottom:2px solid #a6a6a6;"></div>
<svg class="a" style="left:856px;top:289px" width="17" height="17" viewBox="0 0 17 17"><defs><radialGradient id="xg" cx="0.4" cy="0.35" r="0.7"><stop offset="0" stop-color="#ff7a50"/><stop offset="1" stop-color="#c01808"/></radialGradient></defs><circle cx="8.5" cy="8.5" r="7" fill="url(#xg)" stroke="#a01000" stroke-width="0.6"/><path d="M6,6 L11,11 M11,6 L6,11" stroke="#fff" stroke-width="2.2" stroke-linecap="round"/></svg>
<div class="a" style="left:890px;top:278px;width:197px;height:36px;border:1px solid #b4b4b4;border-radius:3px;box-shadow:inset 1px 1px 0 #fafafa, 1px 1px 0 #fafafa"></div>
<div class="t" style="left:895.8px;top:272.86px;font-size:11px;color:#000;letter-spacing:-0.15px;background:#f0f0f0;padding:0 5px 0 3px">Visualizzazione</div>
<div class="a" style="left:896px;top:288px;width:157px;height:20px;background:#fff;border:1px solid #a9a9a9;"></div>
<div class="t" style="left:899.3px;top:292.76px;font-size:11px;letter-spacing:-0.1px">Default</div>
<div class="a" style="left:1036px;top:289px;width:15px;height:16px;border:1px solid #7a7a7a;border-radius:3px;background:linear-gradient(#fafafa,#dcdcdc)"></div>
<svg class="a" style="left:1039px;top:295px" width="9" height="5" viewBox="0 0 9 5"><path d="M0,0 H9 L4.5,5Z" fill="#000"/></svg>
<div class="a" style="left:1058px;top:287px;width:23px;height:21px;background:#f0f0f0;border-top:1px solid #e4e4e4;border-left:1px solid #e4e4e4;border-right:2px solid #a6a6a6;border-bottom:2px solid #a6a6a6;"></div>
<svg class="a" style="left:1059px;top:288px" width="20" height="20" viewBox="0 0 20 20"><defs><linearGradient id="fg" x1="0" y1="0" x2="0" y2="1"><stop offset="0" stop-color="#fffbd0"/><stop offset="1" stop-color="#f0d020"/></linearGradient></defs><path d="M8.5,5.5 L12,4.5 L12.5,3.5 L17,2.5 L17,13.5 L8.5,16Z" fill="#f8e890" stroke="#a88010" stroke-width="0.9"/><path d="M3,8.5 L12,6.5 L13.5,14 L4.5,17 Z" fill="url(#fg)" stroke="#a88010" stroke-width="0.9"/></svg>
<div class="a" style="left:114px;top:324px;width:973px;height:321px;background:#ababab;border:1px solid #000;border-right:1px solid #000"></div>
<div class="a" style="left:115px;top:325px;width:854px;height:15px;background:#f0f0f0"></div>
<div class="a" style="left:134px;top:325px;width:1px;height:15px;background:#c8c8c8"></div>
<div class="a" style="left:234px;top:325px;width:1px;height:15px;background:#c8c8c8"></div>
<div class="a" style="left:367px;top:325px;width:1px;height:15px;background:#c8c8c8"></div>
<div class="a" style="left:634px;top:325px;width:1px;height:15px;background:#c8c8c8"></div>
<div class="a" style="left:835px;top:325px;width:1px;height:15px;background:#c8c8c8"></div>
<div class="a" style="left:901px;top:325px;width:1px;height:15px;background:#c8c8c8"></div>
<div class="a" style="left:969px;top:325px;width:1px;height:15px;background:#c8c8c8"></div>
<div class="t" style="left:137.6px;top:327.66px;font-size:11px;">Stato</div>
<div class="t" style="right:1230.5px;top:327.66px;font-size:11px;">Item ID</div>
<div class="t" style="left:370px;top:327.66px;font-size:11px;">Titolo</div>
<div class="t" style="left:637px;top:327.66px;font-size:11px;">Categoria</div>
<div class="t" style="right:696.5px;top:327.66px;font-size:11px;">Quantita'</div>
<div class="t" style="right:629.5px;top:327.66px;font-size:11px;">Prezzo</div>
<div class="a" style="left:115px;top:340px;width:854px;height:304px;background:#ffaf00"></div>
<div class="a" style="left:135px;top:357px;width:834px;height:1px;background:#eec764"></div>
<div class="a" style="left:115px;top:357px;width:19px;height:1px;background:#ddd6c4"></div>
<div class="t" style="left:137.6px;top:343.86px;font-size:11px;letter-spacing:-0.1px">Da pubblicare</div>
<div class="t" style="left:370px;top:343.86px;font-size:11px;transform:scaleX(0.9);transform-origin:0 0">32GB CORSAIR FLASH VOYAGER SLIDER</div>
<div class="a" style="left:135px;top:373px;width:834px;height:1px;background:#eec764"></div>
<div class="a" style="left:115px;top:373px;width:19px;height:1px;background:#ddd6c4"></div>
<div class="t" style="left:137.6px;top:359.86px;font-size:11px;letter-spacing:-0.1px">Da pubblicare</div>
<div class="t" style="left:370px;top:359.86px;font-size:11px;transform:scaleX(0.9);transform-origin:0 0">3M PRIVACY GOLD PER NOTEBOOK GPF 12.1W</div>
<div class="a" style="left:135px;top:389px;width:834px;height:1px;background:#eec764"></div>
<div class="a" style="left:115px;top:389px;width:19px;height:1px;background:#ddd6c4"></div>
<div class="t" style="left:137.6px;top:375.86px;font-size:11px;letter-spacing:-0.1px">Da pubblicare</div>
<div class="t" style="left:370px;top:375.86px;font-size:11px;transform:scaleX(0.9);transform-origin:0 0">3M PRIVACY GOLD PER NOTEBOOK GPF 15.6W</div>
<div class="a" style="left:135px;top:405px;width:834px;height:1px;background:#eec764"></div>
<div class="a" style="left:115px;top:405px;width:19px;height:1px;background:#ddd6c4"></div>
<div class="t" style="left:137.6px;top:391.86px;font-size:11px;letter-spacing:-0.1px">Da pubblicare</div>
<div class="t" style="left:370px;top:391.86px;font-size:11px;transform:scaleX(0.9);transform-origin:0 0">3M PRIVACY GOLD PER NOTEBOOK GPF 19.0</div>
<div class="a" style="left:135px;top:421px;width:834px;height:1px;background:#eec764"></div>
<div class="a" style="left:115px;top:421px;width:19px;height:1px;background:#ddd6c4"></div>
<div class="t" style="left:137.6px;top:407.86px;font-size:11px;letter-spacing:-0.1px">Da pubblicare</div>
<div class="t" style="left:370px;top:407.86px;font-size:11px;transform:scaleX(0.9);transform-origin:0 0">3M PRIVACY GOLD X NOTEBOOK GPF 13.3W</div>
<div class="a" style="left:135px;top:437px;width:834px;height:1px;background:#eec764"></div>
<div class="a" style="left:115px;top:437px;width:19px;height:1px;background:#ddd6c4"></div>
<div class="t" style="left:137.6px;top:423.86px;font-size:11px;letter-spacing:-0.1px">Da pubblicare</div>
<div class="t" style="left:370px;top:423.86px;font-size:11px;transform:scaleX(0.9);transform-origin:0 0">3M PRIVACY P/NOTEBOOK/LCD 15.6W9 16:9</div>
<div class="a" style="left:135px;top:453px;width:834px;height:1px;background:#eec764"></div>
<div class="a" style="left:115px;top:453px;width:19px;height:1px;background:#ddd6c4"></div>
<div class="t" style="left:137.6px;top:439.86px;font-size:11px;letter-spacing:-0.1px">Da pubblicare</div>
<div class="t" style="left:370px;top:439.86px;font-size:11px;transform:scaleX(0.9);transform-origin:0 0">3M PRIVACY PER NOTEBOOK/LCD 12.1 16:9</div>
<div class="a" style="left:135px;top:469px;width:834px;height:1px;background:#eec764"></div>
<div class="a" style="left:115px;top:469px;width:19px;height:1px;background:#ddd6c4"></div>
<div class="t" style="left:137.6px;top:455.86px;font-size:11px;letter-spacing:-0.1px">Da pubblicare</div>
<div class="t" style="left:370px;top:455.86px;font-size:11px;transform:scaleX(0.9);transform-origin:0 0">3M PRIVACY PER NOTEBOOK/LCD 13.3 16:10</div>
<div class="a" style="left:135px;top:485px;width:834px;height:1px;background:#eec764"></div>
<div class="a" style="left:115px;top:485px;width:19px;height:1px;background:#ddd6c4"></div>
<div class="t" style="left:137.6px;top:471.86px;font-size:11px;letter-spacing:-0.1px">Da pubblicare</div>
<div class="t" style="left:370px;top:471.86px;font-size:11px;transform:scaleX(0.9);transform-origin:0 0">3M PRIVACY PER NOTEBOOK/LCD 13.3 16:9</div>
<div class="a" style="left:135px;top:501px;width:834px;height:1px;background:#eec764"></div>
<div class="a" style="left:115px;top:501px;width:19px;height:1px;background:#ddd6c4"></div>
<div class="t" style="left:137.6px;top:487.86px;font-size:11px;letter-spacing:-0.1px">Da pubblicare</div>
<div class="t" style="left:370px;top:487.86px;font-size:11px;transform:scaleX(0.9);transform-origin:0 0">3M PRIVACY PER NOTEBOOK/LCD 17.0 16:10</div>
<div class="a" style="left:135px;top:517px;width:834px;height:1px;background:#eec764"></div>
<div class="a" style="left:115px;top:517px;width:19px;height:1px;background:#ddd6c4"></div>
<div class="t" style="left:137.6px;top:503.86px;font-size:11px;letter-spacing:-0.1px">Da pubblicare</div>
<div class="t" style="left:370px;top:503.86px;font-size:11px;transform:scaleX(0.9);transform-origin:0 0">3M PRIVACY PER NOTEBOOK/LCD 17.0 5:4</div>
<div class="a" style="left:135px;top:533px;width:834px;height:1px;background:#eec764"></div>
<div class="a" style="left:115px;top:533px;width:19px;height:1px;background:#ddd6c4"></div>
<div class="t" style="left:137.6px;top:519.86px;font-size:11px;letter-spacing:-0.1px">Da pubblicare</div>
<div class="t" style="left:370px;top:519.86px;font-size:11px;transform:scaleX(0.9);transform-origin:0 0">3M PRIVACY PER NOTEBOOK/LCD 17.3 16:9</div>
<div class="a" style="left:135px;top:549px;width:834px;height:1px;background:#eec764"></div>
<div class="a" style="left:115px;top:549px;width:19px;height:1px;background:#ddd6c4"></div>
<div class="t" style="left:137.6px;top:535.86px;font-size:11px;letter-spacing:-0.1px">Da pubblicare</div>
<div class="t" style="left:370px;top:535.86px;font-size:11px;transform:scaleX(0.9);transform-origin:0 0">3M PRIVACY PER NOTEBOOK/LCD 19.0 5:4</div>
<div class="a" style="left:135px;top:565px;width:834px;height:1px;background:#eec764"></div>
<div class="a" style="left:115px;top:565px;width:19px;height:1px;background:#ddd6c4"></div>
<div class="t" style="left:137.6px;top:551.86px;font-size:11px;letter-spacing:-0.1px">Da pubblicare</div>
<div class="t" style="left:370px;top:551.86px;font-size:11px;transform:scaleX(0.9);transform-origin:0 0">3M PRIVACY PER NOTEBOOK/LCD 20.1 WIDE</div>
<div class="a" style="left:135px;top:581px;width:834px;height:1px;background:#eec764"></div>
<div class="a" style="left:115px;top:581px;width:19px;height:1px;background:#ddd6c4"></div>
<div class="t" style="left:137.6px;top:567.86px;font-size:11px;letter-spacing:-0.1px">Da pubblicare</div>
<div class="t" style="left:370px;top:567.86px;font-size:11px;transform:scaleX(0.9);transform-origin:0 0">3M PRIVACY PER NOTEBOOK/LCD 21.3 4:3</div>
<div class="a" style="left:135px;top:597px;width:834px;height:1px;background:#eec764"></div>
<div class="a" style="left:115px;top:597px;width:19px;height:1px;background:#ddd6c4"></div>
<div class="t" style="left:137.6px;top:583.86px;font-size:11px;letter-spacing:-0.1px">Da pubblicare</div>
<div class="t" style="left:370px;top:583.86px;font-size:11px;transform:scaleX(0.9);transform-origin:0 0">3M TELECOMANDO PER PROIETT. MPRO410</div>
<div class="a" style="left:135px;top:613px;width:834px;height:1px;background:#eec764"></div>
<div class="a" style="left:115px;top:613px;width:19px;height:1px;background:#ddd6c4"></div>
<div class="t" style="left:137.6px;top:599.86px;font-size:11px;letter-spacing:-0.1px">Da pubblicare</div>
<div class="t" style="left:370px;top:599.86px;font-size:11px;transform:scaleX(0.9);transform-origin:0 0">4GB MEMORIA CORSAIR PER NOTEBOOK</div>
<div class="a" style="left:135px;top:629px;width:834px;height:1px;background:#eec764"></div>
<div class="a" style="left:115px;top:629px;width:19px;height:1px;background:#ddd6c4"></div>
<div class="t" style="left:137.6px;top:615.86px;font-size:11px;letter-spacing:-0.1px">Da pubblicare</div>
<div class="t" style="left:370px;top:615.86px;font-size:11px;transform:scaleX(0.94);transform-origin:0 0">548220 ANELLO ADATTATORE</div>
<div class="t" style="left:137.6px;top:631.86px;font-size:11px;letter-spacing:-0.1px">Da pubblicare</div>
<div class="t" style="left:370px;top:631.86px;font-size:11px;transform:scaleX(0.94);transform-origin:0 0">ACER A1-713-K14C</div>
<div class="a" style="left:234px;top:340px;width:1px;height:304px;background:#dcc48a"></div>
<div class="a" style="left:367px;top:340px;width:1px;height:304px;background:#dcc48a"></div>
<div class="a" style="left:634px;top:340px;width:1px;height:304px;background:#dcc48a"></div>
<div class="a" style="left:835px;top:340px;width:1px;height:304px;background:#dcc48a"></div>
<div class="a" style="left:901px;top:340px;width:1px;height:304px;background:#dcc48a"></div>
<div class="a" style="left:969px;top:340px;width:1px;height:304px;background:#dcc48a"></div>
<div class="a" style="left:115px;top:340px;width:1px;height:304px;background:#ffd27a"></div>
<div class="a" style="left:115px;top:340px;width:854px;height:1px;background:#6a6a6a"></div>
<div class="a" style="left:134px;top:325px;width:1px;height:319px;background:#5a5048"></div>
<div class="t" style="left:637px;top:343.86px;font-size:11px;">Pendrive</div>
<div class="t" style="right:696.5px;top:343.86px;font-size:11px;">9</div>
<div class="t" style="right:629.5px;top:343.86px;font-size:11px;">24,18</div>
<div class="a" style="left:1070px;top:325px;width:16px;height:319px;background:#ababab"></div>
<div class="a" style="left:1070px;top:325px;width:16px;height:16px;background:linear-gradient(#fbfbfb,#dedede);border:1px solid #b8b8b8;border-radius:2px"></div>
<svg class="a" style="left:1074px;top:330px" width="9" height="6" viewBox="0 0 9 6"><path d="M0,6 H9 L4.5,0Z" fill="#000"/></svg>
<div class="a" style="left:1070px;top:341px;width:16px;height:2px;background:#8e8e8e"></div>
<div class="a" style="left:1070px;top:343px;width:16px;height:40px;background:linear-gradient(90deg,#f4f4f4,#e8e8e8 50%,#d4d4d4);border:1px solid #c4c4c4"></div>
<svg class="a" style="left:1075px;top:344px" width="8" height="12" viewBox="0 0 8 12"><g fill="#9a9a9a"><rect x="0" y="2.5" width="1.3" height="1.3"/><rect x="4.5" y="2.5" width="1.3" height="1.3"/><rect x="0" y="6.5" width="1.3" height="1.3"/><rect x="4.5" y="6.5" width="1.3" height="1.3"/></g></svg>
<div class="a" style="left:116px;top:648px;width:98px;height:73px;background:#f0f0f0;border:1px solid #000;box-shadow:inset -1px -1px 0 #a0a0a0, inset 1px 1px 0 #fff"></div>
<div class="t" style="left:15.0px;width:300px;text-align:center;top:706.06px;font-size:11px;letter-spacing:-0.15px">Nuovo (F4)</div>
<svg class="a" style="left:150.0px;top:662px" width="30" height="30" viewBox="0 0 30 30"><g stroke="#9a9a9a" stroke-width="0.8"><rect x="1.5" y="1.5" width="27" height="27" fill="#fff"/><rect x="1.5" y="10.5" width="27" height="9" fill="#fbb04a"/><path d="M10.5,1.5 V28.5 M19.5,1.5 V28.5 M1.5,10.5 H28.5 M1.5,19.5 H28.5" fill="none"/></g><rect x="19.5" y="1.5" width="9" height="9" fill="#e4e4f4" stroke="#9a9a9a" stroke-width="0.8"/><path d="M19,17 H23 V21 H27 V25 H23 V29 H19 V25 H15 V21 H19Z" fill="#38c038" stroke="#1a8a1a" stroke-width="0.8"/></svg>
<div class="a" style="left:216px;top:649px;width:98px;height:72px;background:#f0f0f0;border-top:1px solid #e6e6e6;border-left:1px solid #e6e6e6;border-right:2px solid #acacac;border-bottom:2px solid #acacac"></div>
<div class="t" style="left:115.0px;width:300px;text-align:center;top:706.06px;font-size:11px;letter-spacing:-0.15px">Visualizza (F2)</div>
<svg class="a" style="left:250.0px;top:662px" width="30" height="30" viewBox="0 0 30 30"><g stroke="#9a9a9a" stroke-width="0.8"><rect x="1.5" y="1.5" width="27" height="27" fill="#fff"/><rect x="1.5" y="10.5" width="27" height="9" fill="#fbb04a"/><path d="M10.5,1.5 V28.5 M19.5,1.5 V28.5 M1.5,10.5 H28.5 M1.5,19.5 H28.5" fill="none"/></g><rect x="19.5" y="1.5" width="9" height="9" fill="#e4e4f4" stroke="#9a9a9a" stroke-width="0.8"/><rect x="13" y="17" width="11" height="12" fill="#fff" stroke="#777" stroke-width="0.8"/><path d="M14,20 L18,25 L27,12" stroke="#1e4aa0" stroke-width="2.8" fill="none"/></svg>
<div class="a" style="left:316px;top:649px;width:98px;height:72px;background:#f0f0f0;border-top:1px solid #e6e6e6;border-left:1px solid #e6e6e6;border-right:2px solid #acacac;border-bottom:2px solid #acacac"></div>
<div class="t" style="left:215.0px;width:300px;text-align:center;top:706.06px;font-size:11px;letter-spacing:-0.15px">Duplica (F5)</div>
<svg class="a" style="left:350.0px;top:662px" width="30" height="30" viewBox="0 0 30 30"><path d="M8.5,0.5 H22 L28.5,7 V25.5 H8.5Z" fill="#c8b8e8" stroke="#6a5aa0" stroke-width="1"/><path d="M22,0.5 V7 H28.5" fill="#e8e0f8" stroke="#6a5aa0" stroke-width="0.8"/><path d="M1.5,4.5 H15 L21.5,11 V29.5 H1.5Z" fill="#fafcff" stroke="#4a5a90" stroke-width="1"/><path d="M15,4.5 V11 H21.5" fill="#d0e0f4" stroke="#4a5a90" stroke-width="0.8"/><rect x="2" y="14.5" width="19" height="14.5" fill="#a8bcdc"/><rect x="2" y="13.5" width="19" height="1" fill="#8aa0c8"/></svg>
<div class="a" style="left:416px;top:649px;width:98px;height:72px;background:#f0f0f0;border-top:1px solid #e6e6e6;border-left:1px solid #e6e6e6;border-right:2px solid #acacac;border-bottom:2px solid #acacac"></div>
<div class="t" style="left:315.0px;width:300px;text-align:center;top:706.06px;font-size:11px;letter-spacing:-0.15px">Aggiornamento</div>
<svg class="a" style="left:450.0px;top:662px" width="30" height="30" viewBox="0 0 30 30"><defs><radialGradient id="gl" cx="0.6" cy="0.3" r="0.75"><stop offset="0" stop-color="#a0d8ff"/><stop offset="0.5" stop-color="#3a8ad8"/><stop offset="1" stop-color="#1a5090"/></radialGradient><linearGradient id="ga" x1="0" y1="0" x2="0" y2="1"><stop offset="0" stop-color="#a8f070"/><stop offset="1" stop-color="#38a828"/></linearGradient></defs><circle cx="15" cy="12.5" r="12.5" fill="url(#gl)"/><path d="M3,14 Q2,6 8,3 Q11,7 7,10 Q10,14 5,18Z M20,2 Q26,5 27.5,12 Q23,14 21,9 Q18,6 20,2Z M12,20 Q18,19 24,22 Q18,26 12,24Z" fill="#2e9a3a" opacity=".85"/><path d="M9,14.5 H21 V19.5 H26.5 L15,30 L3.5,19.5 H9Z" fill="url(#ga)"/></svg>
<div class="a" style="left:516px;top:649px;width:98px;height:72px;background:#f0f0f0;border-top:1px solid #e6e6e6;border-left:1px solid #e6e6e6;border-right:2px solid #acacac;border-bottom:2px solid #acacac"></div>
<div class="t" style="left:415.0px;width:300px;text-align:center;top:706.06px;font-size:11px;letter-spacing:-0.15px">Elaborazioni</div>
<svg class="a" style="left:550.0px;top:662px" width="30" height="30" viewBox="0 0 30 30"><path d="M6,1.5 H15 L20,6.5 V22 H6Z" fill="#f4f8ff" stroke="#7a88b8" stroke-width="0.8"/><path d="M12,9.5 H23 L29,15.5 V30 H12Z" fill="#e8f0fc" stroke="#7a88b8" stroke-width="0.8"/><circle cx="16.5" cy="17" r="5.5" fill="#a8a8e0" stroke="#8080c0" stroke-width="2.2" stroke-dasharray="1.8 1.2"/><circle cx="16.5" cy="17" r="2" fill="#e8e8f8"/></svg>
<div class="a" style="left:108px;top:735px;width:199px;height:24px;background:#dcdcdc;border-top:1px solid #d2d2d2;box-shadow:inset 0 1px 0 #e6e6e6"></div>
<div class="t" style="left:112.5px;top:741.73px;font-size:12px;font-weight:bold;letter-spacing:0.2px;overflow:hidden;padding-bottom:3px;width:193px">11760 record trovati</div>
<div class="a" style="left:309px;top:735px;width:197px;height:24px;background:#dcdcdc;border-top:1px solid #d2d2d2;box-shadow:inset 0 1px 0 #e6e6e6"></div>
<div class="t" style="left:313.5px;top:741.73px;font-size:12px;font-weight:bold;letter-spacing:-0.25px;overflow:hidden;padding-bottom:3px;width:191px">WIRED Soluzioni Informatiche di PULITO</div>
<div class="a" style="left:508px;top:735px;width:200px;height:24px;background:#dcdcdc;border-top:1px solid #d2d2d2;box-shadow:inset 0 1px 0 #e6e6e6"></div>
<div class="t" style="left:512.5px;top:741.73px;font-size:12px;font-weight:bold;letter-spacing:-0.25px;overflow:hidden;padding-bottom:3px;width:194px">Ready Pro V16.7.18</div>
<div class="a" style="left:581px;top:354px;width:864px;height:575px;background:#f0f0f0;border:1px solid #4a525c;border-top-color:#2e3e4e;box-shadow:1px 0 0 #fafafa, 0 1px 0 #fafafa"></div>
<div class="a" style="left:582px;top:355px;width:862px;height:21px;background:linear-gradient(#6b90b9,#6d92bb 45%,#7b9dc6 90%,#6e8cae);border-top:1px solid #a6bfdc;border-bottom:1px solid #e6f0fa;box-shadow:inset 1px 0 0 #a8c0dc"></div>
<div class="t" style="left:585.8px;top:361.53px;font-size:12px;font-weight:bold;color:#f4f7fb;letter-spacing:0px">DIAGNOSTICA FILES</div>
<svg class="a" style="left:1426px;top:360px" width="12" height="12" viewBox="0 0 12 12"><rect x="0.5" y="0.5" width="11" height="11" rx="1.5" fill="rgba(255,255,255,.2)" stroke="rgba(255,255,255,.12)" stroke-width="1"/><path d="M3,3 L9,9 M9,3 L3,9" stroke="#fff" stroke-width="2.4" stroke-linecap="square"/></svg>
<div class="a" style="left:593px;top:384px;width:847px;height:535px;background:#ababab;border:1px solid #000"></div>
<div class="a" style="left:594px;top:385px;width:820px;height:16px;background:#f0f0f0"></div>
<div class="a" style="left:613px;top:385px;width:1px;height:16px;background:#c8c8c8"></div>
<div class="a" style="left:780px;top:385px;width:1px;height:16px;background:#c8c8c8"></div>
<div class="a" style="left:947px;top:385px;width:1px;height:16px;background:#c8c8c8"></div>
<div class="a" style="left:1281px;top:385px;width:1px;height:16px;background:#c8c8c8"></div>
<div class="a" style="left:1414px;top:385px;width:1px;height:16px;background:#c8c8c8"></div>
<div class="t" style="left:617px;top:388.06px;font-size:11px;">Tipo</div>
<div class="t" style="left:783.4px;top:388.06px;font-size:11px;">Riferimento</div>
<div class="t" style="left:950px;top:388.06px;font-size:11px;">File</div>
<div class="t" style="left:1197.5px;width:300px;text-align:center;top:388.06px;font-size:11px;letter-spacing:-0.4px">Dimensioni</div>
<div class="a" style="left:594px;top:401px;width:820px;height:512px;background:#fff"></div>
<div class="a" style="left:594px;top:401px;width:19px;height:512px;background:#f0f0f0"></div>
<div class="a" style="left:1281px;top:401px;width:133px;height:496px;background:#ff0000"></div>
<div class="a" style="left:594px;top:416px;width:687px;height:1px;background:#d4d4d4"></div>
<div class="a" style="left:1281px;top:416px;width:133px;height:1px;background:#ff8a8a"></div>
<div class="t" style="left:617px;top:404.06px;font-size:11px;">Foto</div>
<div class="t" style="left:783.4px;top:404.06px;font-size:11px;letter-spacing:0.1px">172481 -</div>
<div class="t" style="left:950px;top:404.06px;font-size:11px;letter-spacing:0.1px">C:\Users\e-frog\Desktop\e-frog\efrog_archivio\efrog_new_Files\...</div>
<div class="t" style="right:184.5px;top:404.06px;font-size:11px;color:#5c0000">File non trovato</div>
<div class="a" style="left:594px;top:432px;width:687px;height:1px;background:#d4d4d4"></div>
<div class="a" style="left:1281px;top:432px;width:133px;height:1px;background:#ff8a8a"></div>
<div class="t" style="left:617px;top:420.06px;font-size:11px;">Foto</div>
<div class="t" style="left:783.4px;top:420.06px;font-size:11px;letter-spacing:0.1px">172482 -</div>
<div class="t" style="left:950px;top:420.06px;font-size:11px;letter-spacing:0.1px">C:\Users\e-frog\Desktop\e-frog\efrog_archivio\efrog_new_Files\...</div>
<div class="t" style="right:184.5px;top:420.06px;font-size:11px;color:#5c0000">File non trovato</div>
<div class="a" style="left:594px;top:448px;width:687px;height:1px;background:#d4d4d4"></div>
<div class="a" style="left:1281px;top:448px;width:133px;height:1px;background:#ff8a8a"></div>
<div class="t" style="left:617px;top:436.06px;font-size:11px;">Foto</div>
<div class="t" style="left:783.4px;top:436.06px;font-size:11px;letter-spacing:0.1px">172483 -</div>
<div class="t" style="left:950px;top:436.06px;font-size:11px;letter-spacing:0.1px">C:\Users\e-frog\Desktop\e-frog\efrog_archivio\efrog_new_Files\...</div>
<div class="t" style="right:184.5px;top:436.06px;font-size:11px;color:#5c0000">File non trovato</div>
<div class="a" style="left:594px;top:464px;width:687px;height:1px;background:#d4d4d4"></div>
<div class="a" style="left:1281px;top:464px;width:133px;height:1px;background:#ff8a8a"></div>
<div class="t" style="left:617px;top:452.06px;font-size:11px;">Foto</div>
<div class="t" style="left:783.4px;top:452.06px;font-size:11px;letter-spacing:0.1px">172484 -</div>
<div class="t" style="left:950px;top:452.06px;font-size:11px;letter-spacing:0.1px">C:\Users\e-frog\Desktop\e-frog\efrog_archivio\efrog_new_Files\...</div>
<div class="t" style="right:184.5px;top:452.06px;font-size:11px;color:#5c0000">File non trovato</div>
<div class="a" style="left:594px;top:480px;width:687px;height:1px;background:#d4d4d4"></div>
<div class="a" style="left:1281px;top:480px;width:133px;height:1px;background:#ff8a8a"></div>
<div class="t" style="left:617px;top:468.06px;font-size:11px;">Foto</div>
<div class="t" style="left:783.4px;top:468.06px;font-size:11px;letter-spacing:0.1px">172485 -</div>
<div class="t" style="left:950px;top:468.06px;font-size:11px;letter-spacing:0.1px">C:\Users\e-frog\Desktop\e-frog\efrog_archivio\efrog_new_Files\...</div>
<div class="t" style="right:184.5px;top:468.06px;font-size:11px;color:#5c0000">File non trovato</div>
<div class="a" style="left:594px;top:496px;width:687px;height:1px;background:#d4d4d4"></div>
<div class="a" style="left:1281px;top:496px;width:133px;height:1px;background:#ff8a8a"></div>
<div class="t" style="left:617px;top:484.06px;font-size:11px;">Foto</div>
<div class="t" style="left:783.4px;top:484.06px;font-size:11px;letter-spacing:0.1px">172486 -</div>
<div class="t" style="left:950px;top:484.06px;font-size:11px;letter-spacing:0.1px">C:\Users\e-frog\Desktop\e-frog\efrog_archivio\efrog_new_Files\...</div>
<div class="t" style="right:184.5px;top:484.06px;font-size:11px;color:#5c0000">File non trovato</div>
<div class="a" style="left:594px;top:512px;width:687px;height:1px;background:#d4d4d4"></div>
<div class="a" style="left:1281px;top:512px;width:133px;height:1px;background:#ff8a8a"></div>
<div class="t" style="left:617px;top:500.06px;font-size:11px;">Foto</div>
<div class="t" style="left:783.4px;top:500.06px;font-size:11px;letter-spacing:0.1px">172487 -</div>
<div class="t" style="left:950px;top:500.06px;font-size:11px;letter-spacing:0.1px">C:\Users\e-frog\Desktop\e-frog\efrog_archivio\efrog_new_Files\...</div>
<div class="t" style="right:184.5px;top:500.06px;font-size:11px;color:#5c0000">File non trovato</div>
<div class="a" style="left:594px;top:528px;width:687px;height:1px;background:#d4d4d4"></div>
<div class="a" style="left:1281px;top:528px;width:133px;height:1px;background:#ff8a8a"></div>
<div class="t" style="left:617px;top:516.06px;font-size:11px;">Foto</div>
<div class="t" style="left:783.4px;top:516.06px;font-size:11px;letter-spacing:0.1px">172488 -</div>
<div class="t" style="left:950px;top:516.06px;font-size:11px;letter-spacing:0.1px">C:\Users\e-frog\Desktop\e-frog\efrog_archivio\efrog_new_Files\...</div>
<div class="t" style="right:184.5px;top:516.06px;font-size:11px;color:#5c0000">File non trovato</div>
<div class="a" style="left:594px;top:544px;width:687px;height:1px;background:#d4d4d4"></div>
<div class="a" style="left:1281px;top:544px;width:133px;height:1px;background:#ff8a8a"></div>
<div class="t" style="left:617px;top:532.06px;font-size:11px;">Foto</div>
<div class="t" style="left:783.4px;top:532.06px;font-size:11px;letter-spacing:0.1px">172489 -</div>
<div class="t" style="left:950px;top:532.06px;font-size:11px;letter-spacing:0.1px">C:\Users\e-frog\Desktop\e-frog\efrog_archivio\efrog_new_Files\...</div>
<div class="t" style="right:184.5px;top:532.06px;font-size:11px;color:#5c0000">File non trovato</div>
<div class="a" style="left:594px;top:560px;width:687px;height:1px;background:#d4d4d4"></div>
<div class="a" style="left:1281px;top:560px;width:133px;height:1px;background:#ff8a8a"></div>
<div class="t" style="left:617px;top:548.06px;font-size:11px;">Foto</div>
<div class="t" style="left:783.4px;top:548.06px;font-size:11px;letter-spacing:0.1px">172490 -</div>
<div class="t" style="left:950px;top:548.06px;font-size:11px;letter-spacing:0.1px">C:\Users\e-frog\Desktop\e-frog\efrog_archivio\efrog_new_Files\...</div>
<div class="t" style="right:184.5px;top:548.06px;font-size:11px;color:#5c0000">File non trovato</div>
<div class="a" style="left:594px;top:576px;width:687px;height:1px;background:#d4d4d4"></div>
<div class="a" style="left:1281px;top:576px;width:133px;height:1px;background:#ff8a8a"></div>
<div class="t" style="left:617px;top:564.06px;font-size:11px;">Foto</div>
<div class="t" style="left:783.4px;top:564.06px;font-size:11px;letter-spacing:0.1px">172491 -</div>
<div class="t" style="left:950px;top:564.06px;font-size:11px;letter-spacing:0.1px">C:\Users\e-frog\Desktop\e-frog\efrog_archivio\efrog_new_Files\...</div>
<div class="t" style="right:184.5px;top:564.06px;font-size:11px;color:#5c0000">File non trovato</div>
<div class="a" style="left:594px;top:592px;width:687px;height:1px;background:#d4d4d4"></div>
<div class="a" style="left:1281px;top:592px;width:133px;height:1px;background:#ff8a8a"></div>
<div class="t" style="left:617px;top:580.06px;font-size:11px;">Foto</div>
<div class="t" style="left:783.4px;top:580.06px;font-size:11px;letter-spacing:0.1px">172492 -</div>
<div class="t" style="left:950px;top:580.06px;font-size:11px;letter-spacing:0.1px">C:\Users\e-frog\Desktop\e-frog\efrog_archivio\efrog_new_Files\...</div>
<div class="t" style="right:184.5px;top:580.06px;font-size:11px;color:#5c0000">File non trovato</div>
<div class="a" style="left:594px;top:608px;width:687px;height:1px;background:#d4d4d4"></div>
<div class="a" style="left:1281px;top:608px;width:133px;height:1px;background:#ff8a8a"></div>
<div class="t" style="left:617px;top:596.06px;font-size:11px;">Foto</div>
<div class="t" style="left:783.4px;top:596.06px;font-size:11px;letter-spacing:0.1px">172493 -</div>
<div class="t" style="left:950px;top:596.06px;font-size:11px;letter-spacing:0.1px">C:\Users\e-frog\Desktop\e-frog\efrog_archivio\efrog_new_Files\...</div>
<div class="t" style="right:184.5px;top:596.06px;font-size:11px;color:#5c0000">File non trovato</div>
<div class="a" style="left:594px;top:624px;width:687px;height:1px;background:#d4d4d4"></div>
<div class="a" style="left:1281px;top:624px;width:133px;height:1px;background:#ff8a8a"></div>
<div class="t" style="left:617px;top:612.06px;font-size:11px;">Foto</div>
<div class="t" style="left:783.4px;top:612.06px;font-size:11px;letter-spacing:0.1px">172494 -</div>
<div class="t" style="left:950px;top:612.06px;font-size:11px;letter-spacing:0.1px">C:\Users\e-frog\Desktop\e-frog\efrog_archivio\efrog_new_Files\...</div>
<div class="t" style="right:184.5px;top:612.06px;font-size:11px;color:#5c0000">File non trovato</div>
<div class="a" style="left:594px;top:640px;width:687px;height:1px;background:#d4d4d4"></div>
<div class="a" style="left:1281px;top:640px;width:133px;height:1px;background:#ff8a8a"></div>
<div class="t" style="left:617px;top:628.06px;font-size:11px;">Foto</div>
<div class="t" style="left:783.4px;top:628.06px;font-size:11px;letter-spacing:0.1px">172495 -</div>
<div class="t" style="left:950px;top:628.06px;font-size:11px;letter-spacing:0.1px">C:\Users\e-frog\Desktop\e-frog\efrog_archivio\efrog_new_Files\...</div>
<div class="t" style="right:184.5px;top:628.06px;font-size:11px;color:#5c0000">File non trovato</div>
<div class="a" style="left:594px;top:656px;width:687px;height:1px;background:#d4d4d4"></div>
<div class="a" style="left:1281px;top:656px;width:133px;height:1px;background:#ff8a8a"></div>
<div class="t" style="left:617px;top:644.06px;font-size:11px;">Foto</div>
<div class="t" style="left:783.4px;top:644.06px;font-size:11px;letter-spacing:0.1px">172496 -</div>
<div class="t" style="left:950px;top:644.06px;font-size:11px;letter-spacing:0.1px">C:\Users\e-frog\Desktop\e-frog\efrog_archivio\efrog_new_Files\...</div>
<div class="t" style="right:184.5px;top:644.06px;font-size:11px;color:#5c0000">File non trovato</div>
<div class="a" style="left:594px;top:672px;width:687px;height:1px;background:#d4d4d4"></div>
<div class="a" style="left:1281px;top:672px;width:133px;height:1px;background:#ff8a8a"></div>
<div class="t" style="left:617px;top:660.06px;font-size:11px;">Foto</div>
<div class="t" style="left:783.4px;top:660.06px;font-size:11px;letter-spacing:0.1px">172497 -</div>
<div class="t" style="left:950px;top:660.06px;font-size:11px;letter-spacing:0.1px">C:\Users\e-frog\Desktop\e-frog\efrog_archivio\efrog_new_Files\...</div>
<div class="t" style="right:184.5px;top:660.06px;font-size:11px;color:#5c0000">File non trovato</div>
<div class="a" style="left:594px;top:688px;width:687px;height:1px;background:#d4d4d4"></div>
<div class="a" style="left:1281px;top:688px;width:133px;height:1px;background:#ff8a8a"></div>
<div class="t" style="left:617px;top:676.06px;font-size:11px;">Foto</div>
<div class="t" style="left:783.4px;top:676.06px;font-size:11px;letter-spacing:0.1px">172498 -</div>
<div class="t" style="left:950px;top:676.06px;font-size:11px;letter-spacing:0.1px">C:\Users\e-frog\Desktop\e-frog\efrog_archivio\efrog_new_Files\...</div>
<div class="t" style="right:184.5px;top:676.06px;font-size:11px;color:#5c0000">File non trovato</div>
<div class="a" style="left:594px;top:704px;width:687px;height:1px;background:#d4d4d4"></div>
<div class="a" style="left:1281px;top:704px;width:133px;height:1px;background:#ff8a8a"></div>
<div class="t" style="left:617px;top:692.06px;font-size:11px;">Foto</div>
<div class="t" style="left:783.4px;top:692.06px;font-size:11px;letter-spacing:0.1px">172499 -</div>
<div class="t" style="left:950px;top:692.06px;font-size:11px;letter-spacing:0.1px">C:\Users\e-frog\Desktop\e-frog\efrog_archivio\efrog_new_Files\...</div>
<div class="t" style="right:184.5px;top:692.06px;font-size:11px;color:#5c0000">File non trovato</div>
<div class="a" style="left:594px;top:720px;width:687px;height:1px;background:#d4d4d4"></div>
<div class="a" style="left:1281px;top:720px;width:133px;height:1px;background:#ff8a8a"></div>
<div class="t" style="left:617px;top:708.06px;font-size:11px;">Foto</div>
<div class="t" style="left:783.4px;top:708.06px;font-size:11px;letter-spacing:0.1px">172500 -</div>
<div class="t" style="left:950px;top:708.06px;font-size:11px;letter-spacing:0.1px">C:\Users\e-frog\Desktop\e-frog\efrog_archivio\efrog_new_Files\...</div>
<div class="t" style="right:184.5px;top:708.06px;font-size:11px;color:#5c0000">File non trovato</div>
<div class="a" style="left:594px;top:736px;width:687px;height:1px;background:#d4d4d4"></div>
<div class="a" style="left:1281px;top:736px;width:133px;height:1px;background:#ff8a8a"></div>
<div class="t" style="left:617px;top:724.06px;font-size:11px;">Foto</div>
<div class="t" style="left:783.4px;top:724.06px;font-size:11px;letter-spacing:0.1px">172501 -</div>
<div class="t" style="left:950px;top:724.06px;font-size:11px;letter-spacing:0.1px">C:\Users\e-frog\Desktop\e-frog\efrog_archivio\efrog_new_Files\...</div>
<div class="t" style="right:184.5px;top:724.06px;font-size:11px;color:#5c0000">File non trovato</div>
<div class="a" style="left:594px;top:752px;width:687px;height:1px;background:#d4d4d4"></div>
<div class="a" style="left:1281px;top:752px;width:133px;height:1px;background:#ff8a8a"></div>
<div class="t" style="left:617px;top:740.06px;font-size:11px;">Foto</div>
<div class="t" style="left:783.4px;top:740.06px;font-size:11px;letter-spacing:0.1px">172502 -</div>
<div class="t" style="left:950px;top:740.06px;font-size:11px;letter-spacing:0.1px">C:\Users\e-frog\Desktop\e-frog\efrog_archivio\efrog_new_Files\...</div>
<div class="t" style="right:184.5px;top:740.06px;font-size:11px;color:#5c0000">File non trovato</div>
<div class="a" style="left:594px;top:768px;width:687px;height:1px;background:#d4d4d4"></div>
<div class="a" style="left:1281px;top:768px;width:133px;height:1px;background:#ff8a8a"></div>
<div class="t" style="left:617px;top:756.06px;font-size:11px;">Foto</div>
<div class="t" style="left:783.4px;top:756.06px;font-size:11px;letter-spacing:0.1px">172503 -</div>
<div class="t" style="left:950px;top:756.06px;font-size:11px;letter-spacing:0.1px">C:\Users\e-frog\Desktop\e-frog\efrog_archivio\efrog_new_Files\...</div>
<div class="t" style="right:184.5px;top:756.06px;font-size:11px;color:#5c0000">File non trovato</div>
<div class="a" style="left:594px;top:784px;width:687px;height:1px;background:#d4d4d4"></div>
<div class="a" style="left:1281px;top:784px;width:133px;height:1px;background:#ff8a8a"></div>
<div class="t" style="left:617px;top:772.06px;font-size:11px;">Foto</div>
<div class="t" style="left:783.4px;top:772.06px;font-size:11px;letter-spacing:0.1px">172504 -</div>
<div class="t" style="left:950px;top:772.06px;font-size:11px;letter-spacing:0.1px">C:\Users\e-frog\Desktop\e-frog\efrog_archivio\efrog_new_Files\...</div>
<div class="t" style="right:184.5px;top:772.06px;font-size:11px;color:#5c0000">File non trovato</div>
<div class="a" style="left:594px;top:800px;width:687px;height:1px;background:#d4d4d4"></div>
<div class="a" style="left:1281px;top:800px;width:133px;height:1px;background:#ff8a8a"></div>
<div class="t" style="left:617px;top:788.06px;font-size:11px;">Foto</div>
<div class="t" style="left:783.4px;top:788.06px;font-size:11px;letter-spacing:0.1px">172505 -</div>
<div class="t" style="left:950px;top:788.06px;font-size:11px;letter-spacing:0.1px">C:\Users\e-frog\Desktop\e-frog\efrog_archivio\efrog_new_Files\...</div>
<div class="t" style="right:184.5px;top:788.06px;font-size:11px;color:#5c0000">File non trovato</div>
<div class="a" style="left:594px;top:816px;width:687px;height:1px;background:#d4d4d4"></div>
<div class="a" style="left:1281px;top:816px;width:133px;height:1px;background:#ff8a8a"></div>
<div class="t" style="left:617px;top:804.06px;font-size:11px;">Foto</div>
<div class="t" style="left:783.4px;top:804.06px;font-size:11px;letter-spacing:0.1px">172506 -</div>
<div class="t" style="left:950px;top:804.06px;font-size:11px;letter-spacing:0.1px">C:\Users\e-frog\Desktop\e-frog\efrog_archivio\efrog_new_Files\...</div>
<div class="t" style="right:184.5px;top:804.06px;font-size:11px;color:#5c0000">File non trovato</div>
<div class="a" style="left:594px;top:832px;width:687px;height:1px;background:#d4d4d4"></div>
<div class="a" style="left:1281px;top:832px;width:133px;height:1px;background:#ff8a8a"></div>
<div class="t" style="left:617px;top:820.06px;font-size:11px;">Foto</div>
<div class="t" style="left:783.4px;top:820.06px;font-size:11px;letter-spacing:0.1px">172507 -</div>
<div class="t" style="left:950px;top:820.06px;font-size:11px;letter-spacing:0.1px">C:\Users\e-frog\Desktop\e-frog\efrog_archivio\efrog_new_Files\...</div>
<div class="t" style="right:184.5px;top:820.06px;font-size:11px;color:#5c0000">File non trovato</div>
<div class="a" style="left:594px;top:848px;width:687px;height:1px;background:#d4d4d4"></div>
<div class="a" style="left:1281px;top:848px;width:133px;height:1px;background:#ff8a8a"></div>
<div class="t" style="left:617px;top:836.06px;font-size:11px;">Foto</div>
<div class="t" style="left:783.4px;top:836.06px;font-size:11px;letter-spacing:0.1px">172508 -</div>
<div class="t" style="left:950px;top:836.06px;font-size:11px;letter-spacing:0.1px">C:\Users\e-frog\Desktop\e-frog\efrog_archivio\efrog_new_Files\...</div>
<div class="t" style="right:184.5px;top:836.06px;font-size:11px;color:#5c0000">File non trovato</div>
<div class="a" style="left:594px;top:864px;width:687px;height:1px;background:#d4d4d4"></div>
<div class="a" style="left:1281px;top:864px;width:133px;height:1px;background:#ff8a8a"></div>
<div class="t" style="left:617px;top:852.06px;font-size:11px;">Foto</div>
<div class="t" style="left:783.4px;top:852.06px;font-size:11px;letter-spacing:0.1px">172509 -</div>
<div class="t" style="left:950px;top:852.06px;font-size:11px;letter-spacing:0.1px">C:\Users\e-frog\Desktop\e-frog\efrog_archivio\efrog_new_Files\...</div>
<div class="t" style="right:184.5px;top:852.06px;font-size:11px;color:#5c0000">File non trovato</div>
<div class="a" style="left:594px;top:880px;width:687px;height:1px;background:#d4d4d4"></div>
<div class="a" style="left:1281px;top:880px;width:133px;height:1px;background:#ff8a8a"></div>
<div class="t" style="left:617px;top:868.06px;font-size:11px;">Foto</div>
<div class="t" style="left:783.4px;top:868.06px;font-size:11px;letter-spacing:0.1px">172510 -</div>
<div class="t" style="left:950px;top:868.06px;font-size:11px;letter-spacing:0.1px">C:\Users\e-frog\Desktop\e-frog\efrog_archivio\efrog_new_Files\...</div>
<div class="t" style="right:184.5px;top:868.06px;font-size:11px;color:#5c0000">File non trovato</div>
<div class="a" style="left:594px;top:896px;width:687px;height:1px;background:#d4d4d4"></div>
<div class="a" style="left:1281px;top:896px;width:133px;height:1px;background:#ff8a8a"></div>
<div class="t" style="left:617px;top:884.06px;font-size:11px;">Foto</div>
<div class="t" style="left:783.4px;top:884.06px;font-size:11px;letter-spacing:0.1px">172511 -</div>
<div class="t" style="left:950px;top:884.06px;font-size:11px;letter-spacing:0.1px">C:\Users\e-frog\Desktop\e-frog\efrog_archivio\efrog_new_Files\...</div>
<div class="t" style="right:184.5px;top:884.06px;font-size:11px;color:#5c0000">File non trovato</div>
<div class="a" style="left:594px;top:912px;width:820px;height:1px;background:#d4d4d4"></div>
<div class="a" style="left:594px;top:416px;width:19px;height:1px;background:#a8a8a8"></div>
<div class="a" style="left:594px;top:432px;width:19px;height:1px;background:#a8a8a8"></div>
<div class="a" style="left:594px;top:448px;width:19px;height:1px;background:#a8a8a8"></div>
<div class="a" style="left:594px;top:464px;width:19px;height:1px;background:#a8a8a8"></div>
<div class="a" style="left:594px;top:480px;width:19px;height:1px;background:#a8a8a8"></div>
<div class="a" style="left:594px;top:496px;width:19px;height:1px;background:#a8a8a8"></div>
<div class="a" style="left:594px;top:512px;width:19px;height:1px;background:#a8a8a8"></div>
<div class="a" style="left:594px;top:528px;width:19px;height:1px;background:#a8a8a8"></div>
<div class="a" style="left:594px;top:544px;width:19px;height:1px;background:#a8a8a8"></div>
<div class="a" style="left:594px;top:560px;width:19px;height:1px;background:#a8a8a8"></div>
<div class="a" style="left:594px;top:576px;width:19px;height:1px;background:#a8a8a8"></div>
<div class="a" style="left:594px;top:592px;width:19px;height:1px;background:#a8a8a8"></div>
<div class="a" style="left:594px;top:608px;width:19px;height:1px;background:#a8a8a8"></div>
<div class="a" style="left:594px;top:624px;width:19px;height:1px;background:#a8a8a8"></div>
<div class="a" style="left:594px;top:640px;width:19px;height:1px;background:#a8a8a8"></div>
<div class="a" style="left:594px;top:656px;width:19px;height:1px;background:#a8a8a8"></div>
<div class="a" style="left:594px;top:672px;width:19px;height:1px;background:#a8a8a8"></div>
<div class="a" style="left:594px;top:688px;width:19px;height:1px;background:#a8a8a8"></div>
<div class="a" style="left:594px;top:704px;width:19px;height:1px;background:#a8a8a8"></div>
<div class="a" style="left:594px;top:720px;width:19px;height:1px;background:#a8a8a8"></div>
<div class="a" style="left:594px;top:736px;width:19px;height:1px;background:#a8a8a8"></div>
<div class="a" style="left:594px;top:752px;width:19px;height:1px;background:#a8a8a8"></div>
<div class="a" style="left:594px;top:768px;width:19px;height:1px;background:#a8a8a8"></div>
<div class="a" style="left:594px;top:784px;width:19px;height:1px;background:#a8a8a8"></div>
<div class="a" style="left:594px;top:800px;width:19px;height:1px;background:#a8a8a8"></div>
<div class="a" style="left:594px;top:816px;width:19px;height:1px;background:#a8a8a8"></div>
<div class="a" style="left:594px;top:832px;width:19px;height:1px;background:#a8a8a8"></div>
<div class="a" style="left:594px;top:848px;width:19px;height:1px;background:#a8a8a8"></div>
<div class="a" style="left:594px;top:864px;width:19px;height:1px;background:#a8a8a8"></div>
<div class="a" style="left:594px;top:880px;width:19px;height:1px;background:#a8a8a8"></div>
<div class="a" style="left:594px;top:896px;width:19px;height:1px;background:#a8a8a8"></div>
<div class="a" style="left:594px;top:912px;width:19px;height:1px;background:#a8a8a8"></div>
<div class="a" style="left:594px;top:400px;width:819px;height:1px;background:#a0a0a0"></div>
<div class="a" style="left:613px;top:401px;width:1px;height:512px;background:#d4d4d4"></div>
<div class="a" style="left:780px;top:401px;width:1px;height:512px;background:#d4d4d4"></div>
<div class="a" style="left:947px;top:401px;width:1px;height:512px;background:#d4d4d4"></div>
<div class="a" style="left:1281px;top:401px;width:1px;height:512px;background:#d4d4d4"></div>
<div class="a" style="left:613px;top:385px;width:1px;height:527px;background:#8a8a8a"></div>
<div class="a" style="left:594px;top:401px;width:1px;height:512px;background:#fff"></div>
<div class="a" style="left:594px;top:881px;width:19px;height:15px;background:linear-gradient(#fafafa,#e6e6e6);border:1px solid #c0c0c0"></div>
<div class="a" style="left:1422px;top:385px;width:17px;height:532px;background:#f0f0f0"></div>
<div class="a" style="left:1422px;top:385px;width:17px;height:17px;background:linear-gradient(#fbfbfb,#dedede);border:1px solid #b8b8b8;border-radius:2px"></div>
<svg class="a" style="left:1426px;top:390px" width="9" height="6" viewBox="0 0 9 6"><path d="M0,6 H9 L4.5,0Z" fill="#000"/></svg>
<div class="a" style="left:1422px;top:885px;width:17px;height:15px;background:linear-gradient(90deg,#e8e8e8,#f2f2f2,#dadada);border:1px solid #c4c4c4"></div>
<svg class="a" style="left:1427px;top:887px" width="8" height="12" viewBox="0 0 8 12"><g fill="#a8a8a8"><rect x="0" y="0" width="1.3" height="1.3"/><rect x="4.5" y="0" width="1.3" height="1.3"/><rect x="0" y="4" width="1.3" height="1.3"/><rect x="4.5" y="4" width="1.3" height="1.3"/><rect x="0" y="8" width="1.3" height="1.3"/><rect x="4.5" y="8" width="1.3" height="1.3"/></g></svg>
<div class="a" style="left:1422px;top:900px;width:17px;height:1px;background:#9a9a9a"></div>
<div class="a" style="left:1422px;top:901px;width:17px;height:16px;background:linear-gradient(#fbfbfb,#dedede);border:1px solid #b8b8b8;border-radius:2px"></div>
<svg class="a" style="left:1427px;top:908px" width="8" height="5" viewBox="0 0 8 5"><path d="M0,0 H8 L4,5Z" fill="#000"/></svg></body></html>
